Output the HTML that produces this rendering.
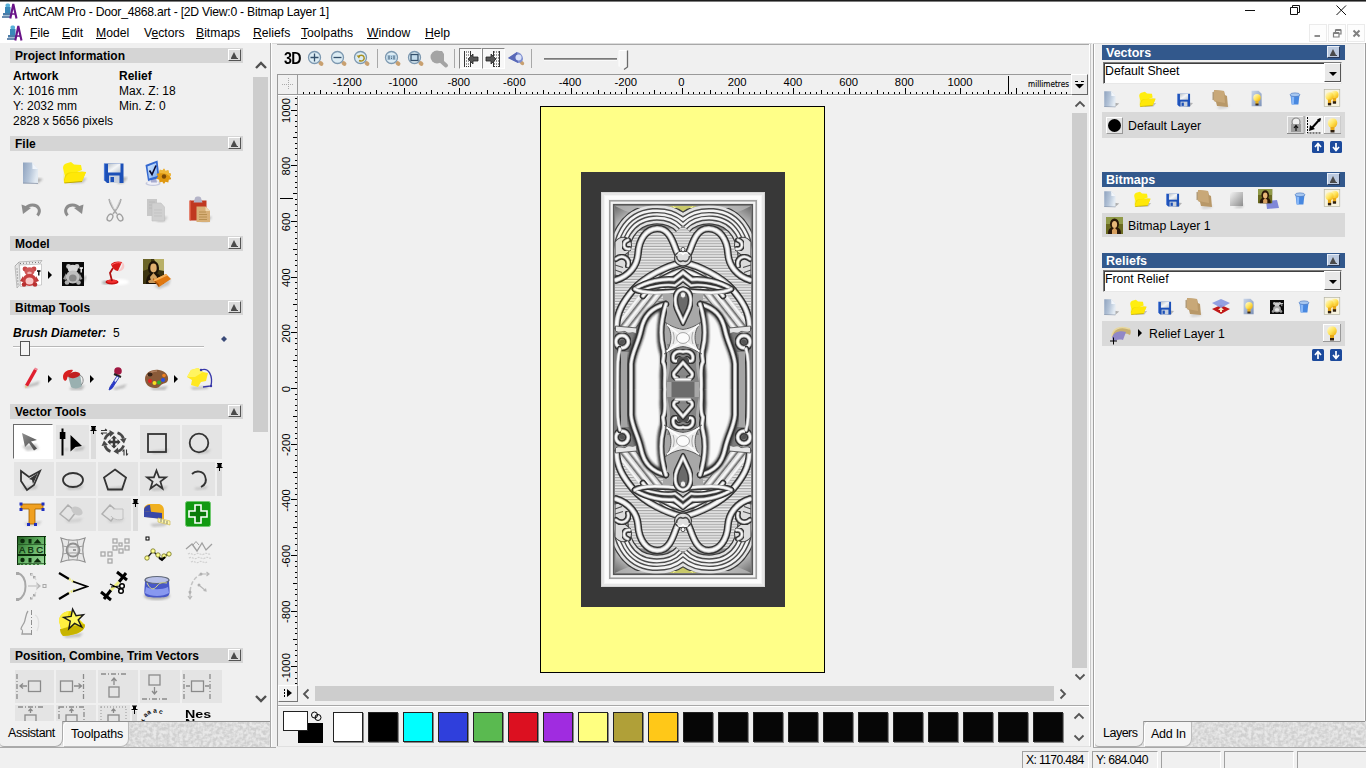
<!DOCTYPE html>
<html lang="en">
<head>
<meta charset="utf-8">
<title>ArtCAM Pro - Door_4868.art - [2D View:0 - Bitmap Layer 1]</title>
<style>
*{box-sizing:border-box;margin:0;padding:0}
html,body{width:1366px;height:768px;overflow:hidden;background:#f0f0f0;font-family:"Liberation Sans",sans-serif;font-size:12px;color:#000}
.abs{position:absolute}
#app{position:relative;width:1366px;height:768px;overflow:hidden;background:#f0f0f0}
#topline{left:0;top:0;width:1366px;height:2px;background:linear-gradient(#1b1b1b 0,#1b1b1b 1px,#7c7c7c 1px,#7c7c7c 2px)}
#titlebar{left:0;top:2px;width:1366px;height:21px;background:#fff}
#title{left:23px;top:3px;font-size:12.2px;line-height:14px;white-space:nowrap;color:#000;letter-spacing:-0.24px}
#menubar{left:0;top:23px;width:1366px;height:20px;background:#fff}
.mi{position:absolute;top:3px;font-size:12.2px;line-height:14px;white-space:nowrap}
.mi u{text-decoration:underline;text-underline-offset:1px}
/* left panel */
#left{left:0;top:43px;width:272px;height:705px;background:#f0f0f0}
.lh{position:absolute;left:10px;width:233px;height:15px;background:#d5d5d5;font-weight:bold;font-size:12px;line-height:17px;overflow:hidden;padding-left:5px;white-space:nowrap;color:#000}
.cbtn{position:absolute;width:13px;height:12px;background:#dcdcdc;border-right:1px solid #555;border-bottom:1px solid #555;border-left:1px solid #fff;border-top:1px solid #fff}
.cbtn:after{content:"";position:absolute;left:2px;top:2px;border-left:3.500px solid transparent;border-right:3.500px solid transparent;border-bottom:6px solid #4a4a4a}
.cbtn:before{content:"";position:absolute;left:2px;top:8px;width:7px;height:1px;background:#4a4a4a}
.cb2{background:#bccadf;border-left-color:#e8eef8;border-top-color:#e8eef8;border-right-color:#2a3a58;border-bottom-color:#2a3a58}
.t{position:absolute;white-space:nowrap;font-size:12px;line-height:14px}
.b{font-weight:bold}
.ic{position:absolute;overflow:visible}
.cell{position:absolute;background:#e4e4e4}
.pin{position:absolute;width:5px;background:#dcdcdc}
/* right panel */
.rh{position:absolute;left:1102px;width:243px;height:15px;background:#32588c;color:#fff;font-weight:bold;font-size:12.5px;line-height:17px;overflow:hidden;padding-left:4px}
.rrow{position:absolute;left:1102px;width:243px;background:#d9d9d9}
.dd{position:absolute;left:1103px;width:239px;height:22px;background:#fff;border:1px solid #7a7a7a;border-right-color:#e8e8e8;border-bottom-color:#e8e8e8;box-shadow:inset 1px 1px 0 #404040}
.ddb{position:absolute;right:0px;top:0px;width:17px;height:19px;background:#e8e8e8;border:1px solid #fff;border-right-color:#555;border-bottom-color:#555}
.ddb:after{content:"";position:absolute;left:4px;top:8px;border-left:4px solid transparent;border-right:4px solid transparent;border-top:4px solid #000}
.sw{position:absolute;top:712px;width:30px;height:30px;border:1px solid #222;box-shadow:1px 1px 0 #888}
.sb{position:absolute;height:18px;top:751px;border:1px solid #a0a0a0;border-right-color:#fff;border-bottom-color:#fff;font-size:12.2px;line-height:16px;padding-left:3px;white-space:nowrap;overflow:hidden;letter-spacing:-0.65px}
</style>
</head>
<body>
<div id="app">
<svg width="0" height="0" style="position:absolute">
<defs>
<linearGradient id="gBlue" x1="0" y1="0" x2="1" y2="1"><stop offset="0" stop-color="#c9d6ea"/><stop offset="1" stop-color="#7d92b8"/></linearGradient>
<linearGradient id="gYel" x1="0" y1="0" x2="0" y2="1"><stop offset="0" stop-color="#fff25a"/><stop offset="1" stop-color="#e6cf10"/></linearGradient>
<linearGradient id="gBulb" x1="0" y1="0" x2="1" y2="1"><stop offset="0" stop-color="#fffbe0"/><stop offset="0.500" stop-color="#ffe45a"/><stop offset="1" stop-color="#f0a800"/></linearGradient>
<linearGradient id="gGrey" x1="0" y1="0" x2="1" y2="1"><stop offset="0" stop-color="#f4f4f4"/><stop offset="1" stop-color="#8c8c8c"/></linearGradient>
<linearGradient id="gNew" x1="0" y1="0" x2="1" y2="0.300"><stop offset="0" stop-color="#8ea2be"/><stop offset="0.550" stop-color="#b4c4d8"/><stop offset="1" stop-color="#e2eaf2"/></linearGradient>
<linearGradient id="gSilver" x1="0" y1="0" x2="1" y2="1"><stop offset="0" stop-color="#b8c0c8"/><stop offset="0.500" stop-color="#f4f6f8"/><stop offset="1" stop-color="#c0c8d0"/></linearGradient>
<linearGradient id="gScreen" x1="0" y1="0" x2="1" y2="1"><stop offset="0" stop-color="#d8ecff"/><stop offset="1" stop-color="#78a8f0"/></linearGradient>
<linearGradient id="gArrow" x1="0" y1="0" x2="1" y2="1"><stop offset="0" stop-color="#909090"/><stop offset="1" stop-color="#484848"/></linearGradient>
<linearGradient id="gAbc" x1="0" y1="0" x2="1" y2="1"><stop offset="0" stop-color="#1e5a1e"/><stop offset="0.450" stop-color="#5eae5e"/><stop offset="1" stop-color="#a4e0a4"/></linearGradient>
<filter id="noise" x="0" y="0" width="100%" height="100%" color-interpolation-filters="sRGB"><feTurbulence type="fractalNoise" baseFrequency="0.300" numOctaves="2" seed="3"/><feColorMatrix type="matrix" values="0 0 0 0 0.910  0 0 0 0 0.910  0 0 0 0 0.910  1.800 1.800 0 0 -1.300"/><feComposite in2="SourceGraphic" operator="in"/></filter>
<filter id="blur1"><feGaussianBlur stdDeviation="0.800"/></filter>
<filter id="blur2"><feGaussianBlur stdDeviation="1.500"/></filter>

<symbol id="i-app" viewBox="0 0 17 17">
  <rect x="3.500" y="0.500" width="4.500" height="4" rx="1.500" fill="#58b0d8"/><rect x="3" y="4" width="5.500" height="6" fill="#3a88b8"/><rect x="1" y="10" width="8" height="2.500" fill="#4a7ca8"/><rect x="0" y="13" width="9" height="2" fill="#6a8cb0"/>
  <path d="M8.300 15.500L11.300 1L14.500 15.500" fill="none" stroke="#6a1488" stroke-width="2.100"/><path d="M9.500 11h4" stroke="#6a1488" stroke-width="1.500"/>
</symbol>

<!-- File icons -->
<symbol id="i-new" viewBox="0 0 24 24">
  <path d="M17 17l6 1l-6 5z" fill="#9a9a9a" opacity="0.750" filter="url(#blur1)"/>
  <path d="M3 1.500h9l6 6.500v14.500H3z" fill="url(#gNew)"/><path d="M12 1.500l6 6.500h-5.500c0-2.500 0-4.500-0.500-6.500z" fill="#f2f6fb"/><path d="M3 22l15 0.500" stroke="#8a96a8" stroke-width="0.800"/>
</symbol>
<symbol id="i-open" viewBox="0 0 28 24">
  <path d="M20 17l7 0l-4 5l-14 0.500z" fill="#9a9a9a" opacity="0.550" filter="url(#blur1)"/>
  <path d="M3 7c0-2 1-4 3-4.500l5-1.500l3 2.500l7 0.500l1 5l-17 7z" fill="#ffee10"/>
  <path d="M3 7l1 15l18-1.500l4-9.500l-4-0.500l-13 1c-3 0.500-4.500 3-5 7z" fill="#f0dc00"/><path d="M4 22l18-1.500l4-9.500c-6 0-15 0.500-17 1.500s-4 4-5 9.500z" fill="#ffe808"/><path d="M4.500 22l17.500-1.500" stroke="#b8a400" stroke-width="0.900"/>
</symbol>
<symbol id="i-save" viewBox="0 0 26 24">
  <path d="M20 16l6 0.500l-5 6l-6 0z" fill="#9a9a9a" opacity="0.700" filter="url(#blur1)"/>
  <path d="M2.500 2.500h19v19.500H5l-2.500-2.500z" fill="#1c50b8"/><rect x="6" y="2.500" width="12.500" height="9" fill="url(#gSilver)"/><rect x="7" y="14.500" width="10.500" height="7.500" fill="#c8d0dc"/><rect x="8.500" y="16" width="3.500" height="5" fill="#1c50b8"/><path d="M2.500 2.500v17" stroke="#4878d8" stroke-width="1.200"/>
</symbol>
<symbol id="i-opts" viewBox="0 0 28 28">
  <ellipse cx="10" cy="24.500" rx="7.500" ry="2.500" fill="#c4c8dc"/><ellipse cx="10" cy="24" rx="6" ry="1.800" fill="#f0f0f8"/>
  <path d="M8 18l5 0.500l1 5h-6z" fill="#a8acd0"/>
  <path d="M2.500 6l12-4.500l2 17.500l-11.500 3z" fill="#3468d0"/><path d="M4.500 7.500l8.500-3.500l1.500 13l-8.500 2.500z" fill="url(#gScreen)"/><path d="M6.500 11.500l2.500 4l4-9" fill="none" stroke="#0a0a30" stroke-width="1.600"/>
  <path d="M21 9.500l1.500 2.500l2.800-0.800l0.500 2.800l2.700 1l-1.500 2.500l1.500 2.500l-2.700 0.800l-0.500 2.800l-2.800-0.800l-1.500 2.200l-1.800-2.200l-2.700 0.800l-0.300-2.800l-2.700-1l1.500-2.300l-1.500-2.500l2.700-1l0.300-2.800l2.700 0.800z" fill="#e09810"/><path d="M21 9.500l1.500 2.500l2.800-0.800l0.500 2.800l2.700 1l-1.500 2.500c-3-3-7-4-11-3l0.500-1.200l0.300-2.800l2.700 0.800z" fill="#f0b838"/><circle cx="21" cy="17.500" r="2.200" fill="#7a4a08"/>
</symbol>
<symbol id="i-undo" viewBox="0 0 24 22">
  <path d="M2 17.500h9M15 17.500h6" stroke="#b4b4b4" stroke-width="1.500" filter="url(#blur1)"/>
  <path d="M17.500 16.500c4-5 1-10.500-5-10.500c-3 0-5 1-6.500 3" fill="none" stroke="#8c8c8c" stroke-width="3"/><path d="M1.500 5.500l9.500 3.500l-8 6z" fill="#8c8c8c"/>
</symbol>
<symbol id="i-redo" viewBox="0 0 24 22">
  <path d="M3 17.500h6M13 17.500h9" stroke="#b4b4b4" stroke-width="1.500" filter="url(#blur1)"/>
  <path d="M6.500 16.500c-4-5-1-10.500 5-10.500c3 0 5 1 6.500 3" fill="none" stroke="#8c8c8c" stroke-width="3"/><path d="M22.500 5.500l-9.500 3.500l8 6z" fill="#8c8c8c"/>
</symbol>
<symbol id="i-cut" viewBox="0 0 22 26">
  <path d="M5 2c1 5 4 10 8 15M17 2c-1 5-4 10-8 15" stroke="#a8a8a8" stroke-width="1.500" fill="none"/><path d="M6 3l4 9M16 3l-4 9" stroke="#d0d0d0" stroke-width="1" fill="none"/>
  <ellipse cx="6" cy="20.500" rx="2.500" ry="3.600" fill="none" stroke="#a0a0a0" stroke-width="1.400" transform="rotate(30 6 20.500)"/><ellipse cx="16" cy="20.500" rx="2.500" ry="3.600" fill="none" stroke="#a0a0a0" stroke-width="1.400" transform="rotate(-30 16 20.500)"/>
</symbol>
<symbol id="i-copy" viewBox="0 0 24 26">
  <path d="M17 19l6 1l-4 5l-8 0z" fill="#b0b0b0" opacity="0.600" filter="url(#blur1)"/>
  <path d="M2 2h10v17H2z" fill="#c8c8c8"/><path d="M4 5h6M4 8h6M4 11h6" stroke="#b8b8b8" stroke-width="0.800"/><path d="M7 6h9l3.500 4v14H7z" fill="#d0d0d0" stroke="#c0c0c0" stroke-width="0.600"/><path d="M9 13h8M9 16h8M9 19h8" stroke="#c0c0c0" stroke-width="0.800"/>
</symbol>
<symbol id="i-paste" viewBox="0 0 26 28">
  <path d="M19 21l6 1l-4 5l-8 0z" fill="#9a9a9a" opacity="0.600" filter="url(#blur1)"/>
  <path d="M3 5.500h16.500v20H3z" fill="#c03820"/><path d="M3 5.500v20" stroke="#e06048" stroke-width="1.500"/><path d="M8 3c0-2 6-2 6 0l1.500 4.500h-9z" fill="#b4b4c8"/><path d="M9.500 11.500h9l4.500 4.500v11h-13.500z" fill="#d8b078"/><path d="M18.500 11.500l4.500 4.500h-4.500z" fill="#f0d8b0"/><path d="M12 17h7M12 19.500h8M12 22h8M12 24.500h8" stroke="#b08848" stroke-width="0.800"/>
</symbol>

<!-- Model icons -->
<symbol id="i-bear" viewBox="0 0 30 30">
  <path d="M1 7l4-4l23-1.500l-3 4z" fill="#ececec" stroke="#9a9a9a" stroke-width="0.600"/><path d="M1 7l4-4l1.500 22l-3.500 4z" fill="#e4e4e4" stroke="#9a9a9a" stroke-width="0.600"/>
  <path d="M6 4.500h1M9 4.300h1M12 4.100h1M15 3.900h1M18 3.700h1M21 3.500h1M24 3.300h1M3 9.500v1M3.200 12.500v1M3.400 15.500v1M3.600 18.500v1M3.800 21.500v1M4 24.500v1" stroke="#555" stroke-width="0.800"/>
  <path d="M5.500 6l22-1l0 21l-21 1.500z" fill="#fff" stroke="#b0b0b0" stroke-width="0.600"/>
  <circle cx="11" cy="10" r="2.400" fill="#c84848"/><circle cx="20" cy="10" r="2.400" fill="#c84848"/><ellipse cx="15.500" cy="12.500" rx="5" ry="4.200" fill="#d05858"/><ellipse cx="15.500" cy="14" rx="2.300" ry="1.600" fill="#f0b0b0"/>
  <path d="M9 17l-3 5l3 1zM22 17l3 5l-3 1z" fill="#b83838"/>
  <ellipse cx="15.500" cy="21" rx="7" ry="6" fill="#c84040"/><ellipse cx="15.500" cy="22" rx="4" ry="3.500" fill="#f8c8c8"/>
  <circle cx="10" cy="25.500" r="2.300" fill="#b83030"/><circle cx="21" cy="25.500" r="2.300" fill="#b83030"/>
  <path d="M23 12h3.500M24.800 12v4.500" stroke="#000" stroke-width="1.300"/>
</symbol>
<symbol id="i-bearbw" viewBox="0 0 26 26">
  <path d="M20 16l6-1l-3 6l-3 1z" fill="#999" opacity="0.700" filter="url(#blur1)"/>
  <rect x="1" y="1" width="22" height="24" fill="#0a0a0a"/>
  <circle cx="7.500" cy="5.500" r="2.400" fill="#c8c8c8"/><circle cx="16" cy="5.500" r="2.400" fill="#c8c8c8"/><ellipse cx="11.800" cy="8" rx="5" ry="4.200" fill="#d8d8d8"/>
  <path d="M5 12l-3 6l3 1zM18.500 12l3 6l-3 1z" fill="#999"/>
  <ellipse cx="11.800" cy="16" rx="7" ry="6.500" fill="#c0c0c0"/><ellipse cx="11.800" cy="17" rx="3.800" ry="3.600" fill="#888"/>
  <circle cx="6" cy="21.500" r="2.300" fill="#b0b0b0"/><circle cx="17.500" cy="21.500" r="2.300" fill="#b0b0b0"/>
  <path d="M18.500 7h3.500M20.200 7v4.500" stroke="#fff" stroke-width="1.300"/>
</symbol>
<symbol id="i-lamp" viewBox="0 0 30 30">
  <ellipse cx="20" cy="23" rx="9" ry="3" fill="#fff" filter="url(#blur1)"/>
  <ellipse cx="7" cy="23.500" rx="5" ry="2" fill="#888" opacity="0.600" filter="url(#blur1)"/>
  <ellipse cx="12" cy="23" rx="6.500" ry="2.600" fill="#c81010"/><ellipse cx="12" cy="22.300" rx="5" ry="1.700" fill="#f03030"/>
  <path d="M12 22l-2-8l3-5" stroke="#b01010" stroke-width="1.800" fill="none"/>
  <path d="M11 5c3-3 8-3 11-2l-4 9c-3 0-6-3-7-7z" fill="#d81818"/><path d="M22 3c1 3-1 7-4 9c2 1 5-1 6-3s0-5-2-6z" fill="#f8c8c8"/><path d="M12 6c2-2 6-3 9-2" stroke="#ff6060" stroke-width="1" fill="none"/>
</symbol>
<symbol id="i-mona" viewBox="0 0 30 32">
  <path d="M12 28l17-7l-2 6l-10 4z" fill="#999" opacity="0.500" filter="url(#blur1)"/>
  <rect x="1" y="1" width="21" height="25" fill="#3c3410"/><path d="M12 1h10v12l-5-1z" fill="#b8b068"/><path d="M1 1h8v9l-8 3z" fill="#6a6428"/>
  <path d="M4 26c0-7 2-11 8-11s8 4 8 11z" fill="#1c1206"/><ellipse cx="11.500" cy="10" rx="5.500" ry="7" fill="#1c1206"/><ellipse cx="11.500" cy="10" rx="3.200" ry="4.400" fill="#e0b070"/><path d="M8 19l3.500-4l3.500 4l-1 4h-5z" fill="#d0a060"/><path d="M6 23c3-2 8-2 11 0l-1 2h-9z" fill="#c89858"/>
  <path d="M11 22l13-6l5 5l-12 8z" fill="#e07810"/><path d="M11 22l6 7v-2.500l-6-6.500z" fill="#a85008"/><path d="M11 22l13-6l1.500 1.500l-13 6z" fill="#f8b058"/>
</symbol>

<!-- Bitmap tool icons -->
<symbol id="i-pencil" viewBox="0 0 24 24">
  <path d="M3 20l16-5l-2 4l-12 3z" fill="#999" opacity="0.600" filter="url(#blur1)"/>
  <path d="M4 19l9-16l3 1.500l-9 16z" fill="#e02030"/><path d="M4 19l0.500 3.500l2.500-2z" fill="#e8c890"/><path d="M13 3l1-1.500l3 1.500l-1 1.500z" fill="#f08090"/>
</symbol>
<symbol id="i-bucket" viewBox="0 0 26 24">
  <path d="M8 21l16-3l-3 5l-11 0z" fill="#999" opacity="0.600" filter="url(#blur1)"/>
  <path d="M7 9l12-2l2 12c-3 3-9 3-11 1z" fill="#9ab0b0"/><ellipse cx="13" cy="8" rx="6.200" ry="3" fill="#c02020" transform="rotate(-10 13 8)"/>
  <path d="M2 10c0-5 5-8 10-7c-1 3-5 4-6 9c-1 3-4 2-4-2z" fill="#d82020"/>
  <path d="M19 8c4 2 4 8 1 10" fill="none" stroke="#888" stroke-width="1"/>
</symbol>
<symbol id="i-dropper" viewBox="0 0 24 26">
  <path d="M8 22l14-4l-3 4l-9 2z" fill="#999" opacity="0.600" filter="url(#blur1)"/>
  <circle cx="13" cy="5" r="3.800" fill="#a01840"/><path d="M9 8l7 3" stroke="#222" stroke-width="2"/>
  <path d="M12 10l-7 11l-1 3l3-1.500l7-11z" fill="#e8f0ff" stroke="#3848b8" stroke-width="1"/><path d="M9 15l-4 6l-1 3l3-1.500l4-6.500z" fill="#2838c8"/>
</symbol>
<symbol id="i-palette" viewBox="0 0 30 24">
  <path d="M8 21l18-2l-3 4l-12 0z" fill="#999" opacity="0.600" filter="url(#blur1)"/>
  <path d="M3 12c0-6 6-10 14-9c6 1 10 5 9 10c-1 4-5 3-7 5s-2 3-6 3c-6 0-10-4-10-9z" fill="#8a5a38"/><path d="M5 9c2-3 6-5 10-5" stroke="#b08060" stroke-width="1.500" fill="none"/>
  <ellipse cx="8" cy="7.500" rx="2.500" ry="2" fill="#3a2418"/>
  <circle cx="8" cy="14" r="2" fill="#e82020"/><circle cx="12.500" cy="16" r="2" fill="#f8e020"/><circle cx="17" cy="15.500" r="2" fill="#30b030"/><circle cx="21" cy="13" r="2" fill="#2850e8"/><circle cx="22" cy="8.500" r="1.800" fill="#f08020"/>
</symbol>
<symbol id="i-b2v" viewBox="0 0 30 26">
  <path d="M6 22l20-1l-3 3l-14 1z" fill="#999" opacity="0.500" filter="url(#blur1)"/>
  <path d="M17 5c8-3 12 6 10 16l-8 1" fill="none" stroke="#3838a8" stroke-width="1.300"/>
  <path d="M3 12l4-7l7-2l5 4l5 1l-2 8l-5 1l-3 5l-7-2l1-5z" fill="#ffe820"/>
  <path d="M3 12l4-7l7-2l5 4l-8 5z" fill="#fff460"/>
  <circle cx="17" cy="5" r="1.200" fill="#3838a8"/><circle cx="27" cy="21" r="1.200" fill="#3838a8"/>
</symbol>
<symbol id="i-pin" viewBox="0 0 7 8"><path d="M1 0.500h5M2 1v3M5 1v3M0.500 4.500h6M3.500 5v3" stroke="#000" stroke-width="1" fill="none"/><rect x="2" y="1" width="3" height="3" fill="#000"/></symbol>
<!-- Vector tool icons -->
<symbol id="v-select" viewBox="0 0 26 26">
  <path d="M5 17l14-2l3 5l-12 2z" fill="#bbb" opacity="0.800" filter="url(#blur1)"/>
  <path d="M5 4l15 7l-6 1.500l6 7l-3 2l-5-7.500l-4 4z" fill="url(#gArrow)"/>
</symbol>
<symbol id="v-node" viewBox="0 0 30 30">
  <path d="M16 22l12-3l-2 4l-8 1z" fill="#b0b0b0" opacity="0.800" filter="url(#blur1)"/><path d="M7 22l4-1l-1 3z" fill="#b8b8b8" filter="url(#blur1)"/>
  <path d="M5.500 1.500v27" stroke="#000" stroke-width="2"/><rect x="2.800" y="5" width="5.600" height="7" fill="#000"/>
  <path d="M13.500 8l11.500 11l-6.500 1l-5 4.500z" fill="#000"/>
</symbol>
<symbol id="v-xform" viewBox="0 0 30 30">
  <g fill="none" stroke="#484848" stroke-width="2.600">
  <path d="M5.800 12.500a9.800 9.800 0 0 1 5.700-6.300"/><path d="M18.500 5.800a9.800 9.800 0 0 1 6 5.700"/>
  <path d="M24.700 18.500a9.800 9.800 0 0 1 -6.200 6"/><path d="M11.500 24.500a9.800 9.800 0 0 1 -5.700-6"/></g>
  <path d="M10.500 3l5 3l-4.500 4z M27.500 11l-2.500 5.500l-4-4.500z M19.500 27.500l-5-3l4.500-4z M2.500 19l2.500-5.500l4 4.500z" fill="#484848"/>
  <path d="M15 8.500l3 3h-1.800v2.300h2.300v-1.800l3 3l-3 3v-1.800h-2.300v2.300h1.800l-3 3l-3-3h1.800v-2.300h-2.300v1.800l-3-3l3-3v1.800h2.300v-2.300h-1.800z" fill="#3a3a3a"/>
  <path d="M2 3.500h6M8 3.500l-2-1.500M2 6h6M2 6l2 1.500" stroke="#3a3a3a" stroke-width="1.100" fill="none"/>
  <path d="M25 22.500v6M25 22.500l-1.500 2M27.500 22.500v6M27.500 28.500l1.500-2" stroke="#3a3a3a" stroke-width="1.100" fill="none"/>
</symbol>
<symbol id="v-rect" viewBox="0 0 26 26">
  <path d="M6 20l18-2l-2 4l-14 1z" fill="#bbb" opacity="0.800" filter="url(#blur1)"/>
  <rect x="3" y="3" width="18" height="18" fill="none" stroke="#333" stroke-width="1.800"/>
</symbol>
<symbol id="v-circle" viewBox="0 0 26 26">
  <path d="M8 21l16-3l-3 4l-10 1z" fill="#bbb" opacity="0.800" filter="url(#blur1)"/>
  <circle cx="12" cy="12" r="9.300" fill="none" stroke="#333" stroke-width="1.800"/>
</symbol>
<symbol id="v-poly" viewBox="0 0 28 26">
  <path d="M4 20l16-2l-2 4l-12 1z" fill="#bbb" opacity="0.800" filter="url(#blur1)"/>
  <path d="M3 4l8 6l11-6l-6 14l-7 5l-6-9z" fill="none" stroke="#333" stroke-width="1.800"/><path d="M20 6l-5 11l-1-4l-3-1z" fill="#333"/>
</symbol>
<symbol id="v-ellipse" viewBox="0 0 28 26">
  <path d="M6 20l18-2l-3 4l-12 1z" fill="#bbb" opacity="0.800" filter="url(#blur1)"/>
  <ellipse cx="13" cy="13" rx="10" ry="7" fill="none" stroke="#333" stroke-width="1.800"/>
</symbol>
<symbol id="v-pent" viewBox="0 0 28 26">
  <path d="M6 21l18-2l-3 4l-12 1z" fill="#bbb" opacity="0.800" filter="url(#blur1)"/>
  <path d="M14 2.500l11 8l-4 12h-14l-4-12z" fill="none" stroke="#333" stroke-width="1.800"/>
</symbol>
<symbol id="v-star" viewBox="0 0 26 26">
  <path d="M6 21l18-2l-3 4l-12 1z" fill="#bbb" opacity="0.800" filter="url(#blur1)"/>
  <path d="M12.500 3.500l2.600 6.800h6.900l-5.600 4.300l2.100 6.900l-6-4.300l-6 4.300l2.100-6.900l-5.600-4.300h6.900z" fill="none" stroke="#333" stroke-width="1.700"/>
</symbol>
<symbol id="v-arc" viewBox="0 0 26 26">
  <path d="M8 21l14-2l-2 3l-10 1z" fill="#bbb" opacity="0.800" filter="url(#blur1)"/>
  <path d="M6 7c4-4 11-3 13 2s0 9-4 11" fill="none" stroke="#333" stroke-width="1.800"/>
</symbol>
<symbol id="v-text" viewBox="0 0 28 28">
  <path d="M6 22l18-2l-3 4l-12 1z" fill="#bbb" opacity="0.700" filter="url(#blur1)"/>
  <path d="M3 3h22v5h-8v15h-6v-15h-8z" fill="#f0a020" stroke="#a06000" stroke-width="0.800"/>
  <g fill="#2030c0"><rect x="1.500" y="1.500" width="3" height="3"/><rect x="23.500" y="1.500" width="3" height="3"/><rect x="1.500" y="7" width="3" height="3"/><rect x="23.500" y="7" width="3" height="3"/><rect x="9" y="22" width="3" height="3"/><rect x="16" y="22" width="3" height="3"/></g>
</symbol>
<symbol id="v-g1" viewBox="0 0 30 26">
  <path d="M8 19l18-2l-3 4l-12 1z" fill="#ccc" opacity="0.800" filter="url(#blur1)"/>
  <path d="M3 13l8-9l8 7l-7 9z" fill="none" stroke="#b0b0b0" stroke-width="1.500"/><ellipse cx="20" cy="10" rx="6" ry="4" fill="#c8c8c8" transform="rotate(30 20 10)"/>
</symbol>
<symbol id="v-g2" viewBox="0 0 30 26">
  <path d="M8 19l18-2l-3 4l-12 1z" fill="#ccc" opacity="0.800" filter="url(#blur1)"/>
  <path d="M3 13l8-9l8 7l-7 9z" fill="none" stroke="#b0b0b0" stroke-width="1.500"/><path d="M14 8h10v10c-5 2-10 0-12-3" fill="#e4e4e4" stroke="#c0c0c0" stroke-width="1"/>
</symbol>
<symbol id="v-tape" viewBox="0 0 30 28">
  <path d="M8 23l18-2l-3 4l-12 1z" fill="#999" opacity="0.500" filter="url(#blur1)"/>
  <path d="M2 8c0-3 3-5 7-5h7c4 0 6 3 6 7v8l-18-2z" fill="#f0b020"/><path d="M2 10l18 2v6l-18-2z" fill="#3848a8"/><path d="M2 9c0-3 3-5 6-5l1 7l-7-1z" fill="#3848a8"/>
  <path d="M16 17l12 3v4l-12-3z" fill="#fff8b0" stroke="#c8b040" stroke-width="0.600"/><path d="M19 18v3M22 19v3M25 20v3" stroke="#555" stroke-width="0.700"/>
</symbol>
<symbol id="v-plus" viewBox="0 0 26 26">
  <rect x="0.500" y="0.500" width="25" height="25" rx="2" fill="#129a12" stroke="#70c870" stroke-width="1"/>
  <path d="M10 4h6v6h6v6h-6v6h-6v-6h-6v-6h6z" fill="#0a7a0a" stroke="#fff" stroke-width="1.600"/>
</symbol>
<symbol id="v-abc" viewBox="0 0 30 30">
  <rect x="0" y="0" width="29" height="29" fill="url(#gAbc)"/>
  <path d="M0 0.500h29M0 18.500h29M0 19.500h29M27.500 0v29M0.500 0v29" stroke="#0c2c0c" stroke-width="1"/><path d="M0 8.500h29M0 27.500h29" stroke="#1c4c1c" stroke-width="0.700"/>
  <circle cx="5.500" cy="5" r="2.300" fill="#0c2c0c"/><rect x="11.500" y="3" width="3" height="4.500" fill="#0c2c0c"/><path d="M16.500 7.500l4-4.500l4 4.500z" fill="#0c2c0c"/>
  <text x="2" y="17.300" font-family="Liberation Sans, sans-serif" font-size="9.500" fill="#0c2c0c" stroke="#0c2c0c" stroke-width="0.250" textLength="24">ABC</text>
  <circle cx="5.500" cy="24" r="2.200" fill="#0c2c0c"/><rect x="11.500" y="22" width="3" height="4.500" fill="#0c2c0c"/><path d="M16.500 26.500l4-4.500l4 4.500z" fill="#0c2c0c"/>
  <path d="M2 29v-1M5 29v-1M9 29v-1M13 29v-1M17 29v-1M21 29v-1" stroke="#0c2c0c" stroke-width="1.200"/>
</symbol>
<symbol id="v-warp" viewBox="0 0 28 28">
  <path d="M2 2c8 3 16 3 24 0c-3 8-3 16 0 24c-8-3-16-3-24 0c3-8 3-16 0-24z" fill="#e8e8e8" stroke="#909090" stroke-width="1.200"/>
  <path d="M10 3.500c-1.500 7-1.500 14 0 21M18 3.500c1.500 7 1.500 14 0 21M3.500 10c7 1.500 14 1.500 21 0M3.500 18c7-1.500 14-1.500 21 0" stroke="#a0a0a0" stroke-width="1" fill="none"/>
  <circle cx="14" cy="14" r="6.500" fill="none" stroke="#909090" stroke-width="1.800"/><path d="M17 14h-3" stroke="#909090" stroke-width="1.800"/>
</symbol>
<symbol id="v-dots" viewBox="0 0 32 28">
  <g fill="none" stroke="#a8a8a8" stroke-width="1.300"><rect x="2" y="15" width="4" height="4"/><rect x="9" y="15" width="4" height="4"/><rect x="9" y="22" width="4" height="4"/><rect x="14" y="2" width="4" height="4"/><rect x="26" y="2" width="4" height="4"/><rect x="20" y="6" width="3" height="3"/><rect x="14" y="9" width="4" height="4"/><rect x="20" y="12" width="4" height="4"/><rect x="26" y="9" width="4" height="4"/></g>
</symbol>
<symbol id="v-nodes" viewBox="0 0 30 28">
  <rect x="3" y="2" width="3" height="3" fill="#fff" stroke="#000" stroke-width="1"/>
  <path d="M4 23l6-7l8 8l4-4l4 0" fill="none" stroke="#222" stroke-width="1.500"/>
  <g fill="#ffff90" stroke="#707020" stroke-width="0.800"><circle cx="4" cy="23" r="2.200"/><circle cx="10" cy="16" r="2.200"/><circle cx="15" cy="20" r="2.200"/><circle cx="21" cy="21" r="2.200"/><circle cx="26" cy="19" r="2.200"/></g>
  <path d="M16 23l3 2l3-3" stroke="#000" stroke-width="2" fill="none"/>
</symbol>
<symbol id="v-smooth" viewBox="0 0 30 26">
  <path d="M2 10l6-5l5 7l5-8l4 7l6-6" fill="none" stroke="#a0a0a0" stroke-width="1.300"/>
  <path d="M9 6l3-3.500l3 3.500" fill="none" stroke="#a0a0a0" stroke-width="1"/>
  <path d="M4 15c3-2 5 2 8 0s5 2 8 0s4 1 7 0M5 19c3-2 5 2 8 0s5 2 8 0s4 1 6 0M7 23c3-2 5 2 8 0s5 2 8 0" fill="none" stroke="#d0d0d0" stroke-width="1.200" stroke-dasharray="2 1"/>
</symbol>
<symbol id="v-mir1" viewBox="0 0 32 30">
  <path d="M3 2c10 4 10 22 0 27" fill="none" stroke="#a8a8a8" stroke-width="2"/>
  <g fill="#a8a8a8"><rect x="1" y="1" width="3" height="3"/><rect x="1" y="27" width="3" height="3"/><rect x="15" y="2" width="2.500" height="2.500"/><rect x="15" y="26" width="2.500" height="2.500"/><rect x="18" y="5" width="2.500" height="2.500"/><rect x="18" y="23" width="2.500" height="2.500"/></g>
  <path d="M16 3c8 4 8 20 0 24" fill="none" stroke="#d8d8d8" stroke-width="1.300" stroke-dasharray="3 2"/>
  <path d="M13 15h12M22 12.500l3 2.500l-3 2.500" fill="none" stroke="#b8b8b8" stroke-width="1.200"/><rect x="28" y="13.500" width="3" height="3" fill="none" stroke="#a8a8a8" stroke-width="1"/>
</symbol>
<symbol id="v-vee" viewBox="0 0 32 30">
  <path d="M2 2l10 6M12 22l-10 6" stroke="#000" stroke-width="2.300" fill="none"/>
  <path d="M12 8l6 3.500M18 18.500l-6 3.500" stroke="#e8e880" stroke-width="2.300" fill="none" stroke-dasharray="2 1"/>
  <path d="M16 10.500l14 5l-14 5" stroke="#000" stroke-width="1.800" fill="none"/>
</symbol>
<symbol id="v-trim" viewBox="0 0 32 32">
  <path d="M18 2l10 8M2 22l10 8" stroke="#000" stroke-width="3" fill="none"/>
  <path d="M27 3l-7 9M12 20l-7 9" stroke="#000" stroke-width="3" fill="none"/>
  <path d="M20 12l-8 8" stroke="#f0f080" stroke-width="3"/>
  <path d="M11 14l10 5M12 17l9-1" stroke="#000" stroke-width="1.200"/><circle cx="23" cy="16" r="2.300" fill="#fff" stroke="#000" stroke-width="1.500"/><circle cx="22" cy="21" r="2.300" fill="#fff" stroke="#000" stroke-width="1.500"/>
</symbol>
<symbol id="v-bowl" viewBox="0 0 30 28">
  <ellipse cx="15" cy="23" rx="13" ry="4" fill="#888" opacity="0.600" filter="url(#blur1)"/>
  <path d="M3 7c0 8-2 14 1 16s19 2 22 0s1-8 1-16z" fill="#4858c8"/><path d="M4 14c6 3 16 3 22 0l1 6c-6 4-18 4-24 0z" fill="#8898f0"/>
  <ellipse cx="15" cy="7" rx="12" ry="3.500" fill="#b8c0e8" stroke="#606878" stroke-width="1.200"/>
  <path d="M5 10c3 6 6 8 10 3s7-3 10-3" fill="none" stroke="#d8d888" stroke-width="1"/>
</symbol>
<symbol id="v-mir2" viewBox="0 0 28 30">
  <path d="M18 3c-6 2-12 8-12 20" fill="none" stroke="#c4c4c4" stroke-width="1.500" stroke-dasharray="4 2"/>
  <path d="M18 3h7M22.500 1l2.500 2l-2.500 2M16 15l6 5M19.500 19.500l2.500 0.500l-0.500-2.500M6 22v6M4 25l2 3l2-3" fill="none" stroke="#b8b8b8" stroke-width="1.200"/>
  <circle cx="17" cy="3" r="1.500" fill="#b0b0b0"/><circle cx="15" cy="14" r="1.500" fill="#b0b0b0"/><circle cx="6" cy="21" r="1.500" fill="#b0b0b0"/>
</symbol>
<symbol id="v-face" viewBox="0 0 26 28">
  <path d="M8 2c-3 4-2 8-4 12c-1 2-3 4-3 6c2 1 2 2 1 5h9" fill="none" stroke="#a0a0a0" stroke-width="1.300"/>
  <path d="M11.500 1v26" stroke="#909090" stroke-width="1" stroke-dasharray="5 2 1 2"/>
  <path d="M15 6c4 2 5 10 2 16" fill="none" stroke="#e0e0e0" stroke-width="1.300"/>
</symbol>
<symbol id="v-star3d" viewBox="0 0 32 32">
  <path d="M6 28l20-2l-3 4l-14 1z" fill="#999" opacity="0.500" filter="url(#blur1)"/>
  <path d="M2 14c0-6 5-10 12-10l14 14c0 5-6 10-22 11z" fill="#e8d810"/><path d="M3 22l24-5l1 1c0 5-6 10-22 11c-2-2-3-4-3-7z" fill="#c8b400"/>
  <path d="M2 14c0-5 4-9 10-10l-2 8l6 6l-12 4z" fill="#fff040"/>
  <path d="M17 2l2.500 7h7.500l-6 4.500l2.500 7.500l-6.500-4.500l-6.500 4.500l2.500-7.500l-6-4.500h7.500z" fill="#fff860" stroke="#1a1a1a" stroke-width="1.400" transform="rotate(-8 17 12)"/>
</symbol>
<symbol id="p-row" viewBox="0 0 208 51">
  <g fill="none" stroke="#8a8a8a" stroke-width="1.300">
    <!-- 1: align left -->
    <path d="M2 4v25" stroke-dasharray="5 2 1 2"/><rect x="13.500" y="11" width="12" height="10.500"/><path d="M12 16h-7M8 13.500l-3 2.500l3 2.500"/>
    <!-- 2: align right -->
    <path d="M68.500 4v25" stroke-dasharray="5 2 1 2"/><rect x="45.500" y="11" width="12" height="10.500"/><path d="M59 16h7.500M63.500 13.500l3 2.500l-3 2.500"/>
    <!-- 3: align top -->
    <path d="M86 4h25" stroke-dasharray="5 2 1 2"/><rect x="94" y="17" width="10" height="10"/><path d="M99 15v-7M96.500 11l2.500-3l2.500 3"/>
    <!-- 4: align bottom -->
    <path d="M127 29h25" stroke-dasharray="5 2 1 2"/><rect x="134" y="5" width="11" height="10"/><path d="M139.500 17v7M137 21l2.500 3l2.500-3"/>
    <!-- 5: centre h -->
    <path d="M169 4v25M195 4v25" stroke-dasharray="5 2 1 2"/><rect x="176.500" y="11" width="12" height="10.500"/><path d="M171 16h4M190 16h4"/>
    <!-- row2 -->
    <path d="M3 37h25" stroke-dasharray="5 2 1 2"/><rect x="10" y="45" width="11" height="8"/><path d="M15.500 43v-4M13.500 41l2-2l2 2"/>
    <rect x="44" y="37" width="25" height="16" stroke-dasharray="5 2 1 2"/><rect x="51" y="45" width="11" height="8"/><path d="M56.500 43v-4M54.500 41l2-2l2 2"/>
    <rect x="86" y="37" width="25" height="16" stroke-dasharray="1 2" stroke="#a8a8a8"/><rect x="93" y="45" width="11" height="8"/><path d="M98.500 43v-4M96.500 41l2-2l2 2"/>
  </g>
  <path d="M117 36h5M118.500 36v3M120.500 36v3M116.500 39.500h6M119.500 40v4" stroke="#000" stroke-width="1" fill="none"/><rect x="118" y="36" width="3" height="3" fill="#000"/>
  <path id="arcp" d="M129 53C131 41 146 38 155 52" fill="none"/><text font-family="Liberation Sans, sans-serif" font-size="6.500" font-weight="bold" fill="#000"><textPath href="#arcp">x aa  a c</textPath></text>
</symbol>
<!-- toolbar -->
<symbol id="z-glass" viewBox="0 0 22 22">
  <ellipse cx="16" cy="15.500" rx="2.600" ry="2.100" fill="#c8a070" transform="rotate(35 16 15.500)"/>
  <circle cx="9.500" cy="9.500" r="6" fill="#dcecf4" stroke="#7c98b0" stroke-width="1.300"/>
</symbol>
<symbol id="z-in" viewBox="0 0 22 22"><use href="#z-glass"/><path d="M5.500 9.500h8M9.500 5.500v8" stroke="#34506c" stroke-width="1.300"/></symbol>
<symbol id="z-out" viewBox="0 0 22 22"><use href="#z-glass"/><path d="M5.500 9.500h8" stroke="#34506c" stroke-width="1.300"/></symbol>
<symbol id="z-prev" viewBox="0 0 22 22"><use href="#z-glass"/><path d="M8 12.500c3.500 1.500 6-1 5-3.500s-4.500-2.500-5.500 0" fill="none" stroke="#a89020" stroke-width="1.500"/><path d="M5.500 7.500l2.500 3l1.500-3z" fill="#a89020"/></symbol>
<symbol id="z-11" viewBox="0 0 22 22"><use href="#z-glass"/><rect x="5" y="7" width="9" height="5" fill="#b4d0e4"/><path d="M7 7.500v4M12 7.500v4M9.500 8.500v0.800M9.500 10.200v0.800" stroke="#3c5870" stroke-width="1"/></symbol>
<symbol id="z-fit" viewBox="0 0 22 22"><use href="#z-glass"/><rect x="6" y="6.500" width="7" height="6" fill="#c4dcec" stroke="#34506c" stroke-width="1.300"/></symbol>
<symbol id="z-obj" viewBox="0 0 22 22">
  <path d="M13 13l5 4.500" stroke="#a4a4a4" stroke-width="4" stroke-linecap="round"/><circle cx="9" cy="9" r="6.500" fill="#a4a4a4"/><path d="M9 3h5l2 3v7h-7z" fill="#a4a4a4"/>
</symbol>
<symbol id="t-l1" viewBox="0 0 18 18">
  <path d="M2 2h6M2 5h6M2 8h4M2 11h6M2 14h6M2 16.500h6" stroke="#333" stroke-width="1" stroke-dasharray="1 1"/><path d="M2.500 1v16M8.500 1v5M8.500 12v5" stroke="#333" stroke-width="1"/>
  <path d="M16 7h-5v-3l-5 5l5 5v-3h5z" fill="#555" stroke="#222" stroke-width="0.800"/>
</symbol>
<symbol id="t-l2" viewBox="0 0 18 18">
  <path d="M10 2h6M10 5h6M12 8h4M10 11h6M10 14h6M10 16.500h6" stroke="#333" stroke-width="1" stroke-dasharray="1 1"/><path d="M15.500 1v16M9.500 1v5M9.500 12v5" stroke="#333" stroke-width="1"/>
  <path d="M2 7h5v-3l5 5l-5 5v-3h-5z" fill="#555" stroke="#222" stroke-width="0.800"/>
</symbol>
<symbol id="t-eye" viewBox="0 0 20 20">
  <ellipse cx="15" cy="14" rx="2.400" ry="1.800" fill="#c8a070" transform="rotate(35 15 14)"/>
  <path d="M1 9l9-6c4 1 6 4 6 7c0 2-2 4-5 4z" fill="#8090d0"/><path d="M1 9l9-6l1 11z" fill="#5868b8"/><circle cx="11.500" cy="8.500" r="3" fill="#d8e0f8"/>
</symbol>

<!-- right panel icons -->
<symbol id="r-new" viewBox="0 0 18 20">
  <path d="M6 17l10-1l-2 3l-7 0z" fill="#999" opacity="0.500" filter="url(#blur1)"/>
  <path d="M2 2h5l2 5l3 1l2 8l-12 2z" fill="url(#gBlue)"/><path d="M2 2h5l1 14l-6 2z" fill="#a8b8d4"/>
</symbol>
<symbol id="r-open" viewBox="0 0 20 20">
  <path d="M5 16l13-2l-2 3l-9 1z" fill="#999" opacity="0.400" filter="url(#blur1)"/>
  <path d="M2 6l4-3l9 1v3l4 1l-3 7l-13-1z" fill="url(#gYel)"/><path d="M2 6l4-3l9 1v3l-12 1z" fill="#f6e838"/>
</symbol>
<symbol id="r-save" viewBox="0 0 20 20">
  <path d="M6 17l12-3l-2 3l-8 1z" fill="#999" opacity="0.400" filter="url(#blur1)"/>
  <path d="M2 3h14v14H4l-2-2z" fill="#2a62c8"/><rect x="5" y="3" width="8" height="6" fill="#e8eefa"/><rect x="5" y="12" width="8" height="5" fill="#9db6e8"/><rect x="7" y="13" width="2.500" height="3" fill="#2a62c8"/>
</symbol>
<symbol id="r-book" viewBox="0 0 20 22">
  <path d="M6 19l12-2l-2 3l-8 1z" fill="#999" opacity="0.400" filter="url(#blur1)"/>
  <path d="M3 2l10 1l1 4l2 1l1 11l-11-1l-1-4l-2-1z" fill="#b89868"/><path d="M3 2l10 1l1 12l-11-2z" fill="#c8a878"/><path d="M3 4l-1.500 1l1.500 1l-1.500 1l1.500 1l-1.500 1l1.500 1l-1.500 1l1.500 1" stroke="#987848" stroke-width="0.800" fill="none"/>
</symbol>
<symbol id="r-newbulb" viewBox="0 0 18 22">
  <path d="M2 1h9l4 4v16H2z" fill="url(#gBlue)"/>
  <circle cx="9" cy="10" r="4.800" fill="url(#gBulb)"/><path d="M7 14h4v4h-4z" fill="#e8b020"/><path d="M7 17.500h4v2.500h-4z" fill="#403020"/>
</symbol>
<symbol id="r-bin" viewBox="0 0 16 20">
  <path d="M2 5h12l-1.500 13h-9z" fill="#4888e0"/><path d="M3 5h4l-0.500 13h-2.500z" fill="#88b8f8"/><ellipse cx="8" cy="5" rx="6.500" ry="2.500" fill="#a8c8f0" stroke="#3868b8" stroke-width="0.800"/>
</symbol>
<symbol id="r-bulbs" viewBox="0 0 20 22">
  <rect x="0.500" y="0.500" width="19" height="21" fill="#f8f4e0" stroke="#b0b0a0" stroke-width="0.800"/>
  <circle cx="13" cy="7" r="5" fill="url(#gBulb)"/><path d="M11 11h4v5h-4z" fill="#e8a818"/><path d="M11 15h4v3h-4z" fill="#302010"/>
  <circle cx="7" cy="9" r="5" fill="url(#gBulb)"/><path d="M5 13h4v5h-4z" fill="#e8a818"/><path d="M5 17h4v3h-4z" fill="#302010"/>
</symbol>
<symbol id="r-bulbbtn" viewBox="0 0 18 18">
  <rect x="0.500" y="0.500" width="17" height="17" fill="#e8e8e8" stroke="#fff" stroke-width="1"/><path d="M17.500 0v17.500h-17.500" fill="none" stroke="#999" stroke-width="1"/>
  <circle cx="9" cy="7" r="4.800" fill="url(#gBulb)"/><path d="M7 11h4v3.500h-4z" fill="#e8a818"/><path d="M7 14h4v2.500h-4z" fill="#302010"/>
</symbol>
<symbol id="r-lbtns" viewBox="0 0 54 18">
  <rect x="0.500" y="0.500" width="16" height="17" fill="#d0d0d0" stroke="#f4f4f4"/><path d="M17 0v17.500h-17" fill="none" stroke="#888"/>
  <circle cx="9" cy="6" r="4" fill="#f0f0f0" stroke="#888" stroke-width="1.200"/><rect x="4" y="8" width="10" height="8" fill="#9a9a9a"/><path d="M9 15v-5M7 12l2-2.500l2 2.500" stroke="#111" stroke-width="1.200" fill="none"/>
  <rect x="19.500" y="0.500" width="16" height="17" fill="#f0f0f0" stroke="#f8f8f8"/><path d="M20.500 1v16h14" fill="none" stroke="#000" stroke-width="1" stroke-dasharray="2 1"/>
  <path d="M33 3l-9 10" stroke="#000" stroke-width="2"/><path d="M22 15l1-6l5 4z" fill="#000"/><path d="M34 2l-4 1.500l3 2.500z" fill="#000"/>
  <rect x="37.500" y="0.500" width="16" height="17" fill="#e4e4e4" stroke="#fff"/><path d="M54 0v17.500h-17" fill="none" stroke="#999"/>
  <circle cx="45.500" cy="7" r="4.800" fill="url(#gBulb)"/><path d="M43.500 11h4v3.500h-4z" fill="#e8a818"/><path d="M43.500 14h4v2.500h-4z" fill="#302010"/>
</symbol>
<symbol id="r-updown" viewBox="0 0 30 12">
  <rect x="0" y="0" width="12" height="12" rx="1.500" fill="#1c4a9c"/><path d="M6 10v-7M3 6l3-3.500l3 3.500" stroke="#fff" stroke-width="1.700" fill="none"/>
  <rect x="18" y="0" width="12" height="12" rx="1.500" fill="#1c4a9c"/><path d="M24 2v7M21 6l3 3.500l3-3.500" stroke="#fff" stroke-width="1.700" fill="none"/>
</symbol>
<symbol id="r-grey" viewBox="0 0 18 20">
  <path d="M6 17l10-3l-2 4l-6 0z" fill="#999" opacity="0.500" filter="url(#blur1)"/>
  <rect x="2" y="2" width="13" height="14" fill="url(#gGrey)"/>
</symbol>
<symbol id="r-mona" viewBox="0 0 17 17">
  <rect x="0" y="0" width="17" height="17" fill="#6a6a20"/><rect x="0" y="0" width="17" height="7" fill="#909a48"/>
  <path d="M2 17c0-5 2-7 6.500-7s6.500 2 6.500 7z" fill="#2a1808"/><ellipse cx="8.500" cy="7" rx="4.500" ry="5.500" fill="#2a1808"/><ellipse cx="8.500" cy="7.500" rx="2.600" ry="3.500" fill="#e8b878"/><path d="M6 13l2.500-2.500l2.500 2.500v4h-5z" fill="#d8a060"/>
</symbol>
<symbol id="r-mona2" viewBox="0 0 22 22">
  <path d="M8 12l11-1l2 8l-12 1z" fill="#8088d8"/>
  <g transform="scale(0.850)"><use href="#r-mona" width="17" height="17"/></g>
</symbol>
<symbol id="r-layers" viewBox="0 0 22 20">
  <path d="M2 12l9-4l9 4l-9 5z" fill="#c01818"/><path d="M11 10l3 3h-2v2h-2v-2h-2z" fill="#f8e8c0"/>
  <path d="M2 6l9-4l9 4l-9 5z" fill="#8898e0" opacity="0.900"/>
</symbol>
<symbol id="r-bearbw" viewBox="0 0 16 16">
  <rect x="0" y="0" width="16" height="16" fill="#0a0a0a"/>
  <circle cx="5" cy="4" r="1.600" fill="#bbb"/><circle cx="11" cy="4" r="1.600" fill="#bbb"/><circle cx="8" cy="5.500" r="2.800" fill="#ccc"/>
  <ellipse cx="8" cy="10.500" rx="4.500" ry="3.800" fill="#aaa"/><ellipse cx="8" cy="11" rx="2.500" ry="2" fill="#e4e4e4"/><circle cx="3.500" cy="13" r="1.500" fill="#999"/><circle cx="12.500" cy="13" r="1.500" fill="#999"/>
  <path d="M12 4h3M13.500 4v3" stroke="#fff" stroke-width="0.800"/>
</symbol>
<symbol id="r-relief" viewBox="0 0 24 22">
  <path d="M3 14c0-8 8-12 18-8c1 2 1 4 0 6c-6-3-12-1-14 5z" fill="#c8b070"/><path d="M3 14c0-8 8-12 18-8" fill="none" stroke="#e8d8a0" stroke-width="1.500"/>
  <path d="M3 14c2-5 8-7 14-5l-3 8c-4-1-8 0-10 2z" fill="#9088c8"/>
  <path d="M1 18h7M4.500 14.500v7" stroke="#000" stroke-width="1"/>
</symbol>
</defs>
</svg>
<div class="abs" id="topline"></div>
<div class="abs" id="titlebar">
  <svg class="ic" style="left:2px;top:1px" width="17" height="17" viewBox="0 0 17 17"><use href="#i-app"/></svg>
  <div class="abs" id="title">ArtCAM Pro - Door_4868.art - [2D View:0 - Bitmap Layer 1]</div>
  <svg class="ic" style="left:1240px;top:-2px" width="120" height="21" viewBox="0 0 120 21" fill="none" stroke="#111" stroke-width="1">
    <path d="M5 10.500h10"/>
    <path d="M50.500 7.500h7v7h-7z M52.500 7.500v-2h7v7h-2"/>
    <path d="M96.500 5.500l9.500 9.500M106 5.500l-9.500 9.500"/>
  </svg>
</div>
<div class="abs" id="menubar">
  <svg class="ic" style="left:7px;top:2px" width="17" height="17" viewBox="0 0 17 17"><use href="#i-app"/></svg>
  <span class="mi" style="left:30px"><u>F</u>ile</span>
  <span class="mi" style="left:62px"><u>E</u>dit</span>
  <span class="mi" style="left:96px"><u>M</u>odel</span>
  <span class="mi" style="left:144px">V<u>e</u>ctors</span>
  <span class="mi" style="left:196px"><u>B</u>itmaps</span>
  <span class="mi" style="left:253px"><u>R</u>eliefs</span>
  <span class="mi" style="left:301px"><u>T</u>oolpaths</span>
  <span class="mi" style="left:367px"><u>W</u>indow</span>
  <span class="mi" style="left:425px"><u>H</u>elp</span>
  <svg class="ic" style="left:1308px;top:1px" width="58" height="18" viewBox="0 0 58 18">
    <rect x="1.500" y="0.500" width="17" height="17" fill="#fdfdfd" stroke="#ebebeb"/><rect x="20.500" y="0.500" width="17" height="17" fill="#fdfdfd" stroke="#ebebeb"/><rect x="39.500" y="0.500" width="17" height="17" fill="#fdfdfd" stroke="#ebebeb"/>
    <path d="M6.500 12h5.500" stroke="#8c8c8c" stroke-width="2" fill="none"/>
    <path d="M25.500 9h5.500v4h-5.500z" stroke="#808080" stroke-width="1.200" fill="none"/><path d="M27.500 8.500v-2.500h5.500v4h-2" stroke="#808080" stroke-width="1.200" fill="none"/><path d="M27.500 6h5.500M25.500 9h5.500" stroke="#808080" stroke-width="1.800" fill="none"/>
    <path d="M45.500 6.500l6 6M51.500 6.500l-6 6" stroke="#808080" stroke-width="2" fill="none"/>
  </svg>
</div>
<div class="abs" id="left">
  <!-- coordinates inside are relative to top:43 -->
  <div class="lh" style="top:5px">Project Information</div><div class="cbtn" style="left:228px;top:6px"></div>
  <div class="t b" style="left:13px;top:26px">Artwork</div>
  <div class="t b" style="left:119px;top:26px">Relief</div>
  <div class="t" style="left:13px;top:41px">X: 1016 mm</div>
  <div class="t" style="left:119px;top:41px">Max. Z: 18</div>
  <div class="t" style="left:13px;top:56px">Y: 2032 mm</div>
  <div class="t" style="left:119px;top:56px">Min. Z: 0</div>
  <div class="t" style="left:13px;top:71px">2828 x 5656 pixels</div>

  <div class="lh" style="top:93px">File</div><div class="cbtn" style="left:228px;top:94px"></div>
  <svg class="ic" style="left:20px;top:118px" width="24" height="24"><use href="#i-new"/></svg>
  <svg class="ic" style="left:60px;top:118px" width="28" height="24"><use href="#i-open"/></svg>
  <svg class="ic" style="left:102px;top:118px" width="26" height="24"><use href="#i-save"/></svg>
  <svg class="ic" style="left:143px;top:116px" width="28" height="28"><use href="#i-opts"/></svg>
  <svg class="ic" style="left:20px;top:156px" width="24" height="22"><use href="#i-undo"/></svg>
  <svg class="ic" style="left:61px;top:156px" width="24" height="22"><use href="#i-redo"/></svg>
  <svg class="ic" style="left:104px;top:154px" width="22" height="26"><use href="#i-cut"/></svg>
  <svg class="ic" style="left:145px;top:154px" width="24" height="26"><use href="#i-copy"/></svg>
  <svg class="ic" style="left:187px;top:152px" width="26" height="28"><use href="#i-paste"/></svg>

  <div class="lh" style="top:193px">Model</div><div class="cbtn" style="left:228px;top:194px"></div>
  <svg class="ic" style="left:14px;top:216px" width="30" height="30"><use href="#i-bear"/></svg>
  <svg class="ic" style="left:48px;top:228px" width="5" height="8"><path d="M0 0l4 4l-4 4z" fill="#000"/></svg>
  <svg class="ic" style="left:61px;top:218px" width="26" height="26"><use href="#i-bearbw"/></svg>
  <svg class="ic" style="left:100px;top:216px" width="30" height="30"><use href="#i-lamp"/></svg>
  <svg class="ic" style="left:142px;top:215px" width="30" height="32"><use href="#i-mona"/></svg>

  <div class="lh" style="top:257px">Bitmap Tools</div><div class="cbtn" style="left:228px;top:258px"></div>
  <div class="t b" style="left:13px;top:283px;font-style:italic">Brush Diameter:</div>
  <div class="t" style="left:113px;top:283px">5</div>
  <div class="abs" style="left:13px;top:303px;width:191px;height:2px;background:#b8b8b8;border-bottom:1px solid #fff"></div>
  <div class="abs" style="left:20px;top:298px;width:10px;height:15px;background:#f4f4f4;border:1px solid #555"></div>
  <svg class="ic" style="left:221px;top:293px" width="6" height="6"><path d="M3 0l3 3l-3 3l-3-3z" fill="#3a4a78"/></svg>
  <svg class="ic" style="left:21px;top:323px" width="24" height="24"><use href="#i-pencil"/></svg>
  <svg class="ic" style="left:48px;top:332px" width="5" height="8"><path d="M0 0l4 4l-4 4z" fill="#000"/></svg>
  <svg class="ic" style="left:61px;top:324px" width="26" height="24"><use href="#i-bucket"/></svg>
  <svg class="ic" style="left:90px;top:332px" width="5" height="8"><path d="M0 0l4 4l-4 4z" fill="#000"/></svg>
  <svg class="ic" style="left:105px;top:323px" width="24" height="26"><use href="#i-dropper"/></svg>
  <svg class="ic" style="left:142px;top:324px" width="30" height="24"><use href="#i-palette"/></svg>
  <svg class="ic" style="left:174px;top:332px" width="5" height="8"><path d="M0 0l4 4l-4 4z" fill="#000"/></svg>
  <svg class="ic" style="left:184px;top:322px" width="30" height="26"><use href="#i-b2v"/></svg>

  <div class="lh" style="top:361px">Vector Tools</div><div class="cbtn" style="left:228px;top:362px"></div>
  <!-- row1 y 381..416 -->
  <div class="cell" style="left:13px;top:381px;width:40px;height:35px;background:#fff;border:1px solid #6a6a6a;border-right-color:#fff;border-bottom-color:#fff"></div>
  <div class="cell" style="left:56px;top:382px;width:33px;height:34px"></div><div class="pin" style="left:91px;top:388px;height:28px"></div>
  <div class="cell" style="left:140px;top:382px;width:40px;height:34px"></div>
  <div class="cell" style="left:182px;top:382px;width:40px;height:34px"></div>
  <div class="cell" style="left:14px;top:419px;width:40px;height:34px"></div>
  <div class="cell" style="left:56px;top:419px;width:40px;height:34px"></div>
  <div class="cell" style="left:98px;top:419px;width:40px;height:34px"></div>
  <div class="cell" style="left:140px;top:419px;width:40px;height:34px"></div>
  <div class="cell" style="left:182px;top:419px;width:33px;height:34px"></div><div class="pin" style="left:217px;top:425px;height:28px"></div>
  <div class="cell" style="left:56px;top:455px;width:40px;height:33px"></div>
  <div class="cell" style="left:98px;top:455px;width:33px;height:33px"></div><div class="pin" style="left:133px;top:461px;height:27px"></div>
  <svg class="ic" style="left:17px;top:386px" width="26" height="26"><use href="#v-select"/></svg>
  <svg class="ic" style="left:57px;top:384px" width="30" height="30"><use href="#v-node"/></svg>
  <svg class="ic" style="left:90px;top:383px" width="7" height="8"><use href="#i-pin"/></svg>
  <svg class="ic" style="left:99px;top:384px" width="30" height="30"><use href="#v-xform"/></svg>
  <svg class="ic" style="left:145px;top:388px" width="26" height="26"><use href="#v-rect"/></svg>
  <svg class="ic" style="left:187px;top:388px" width="26" height="26"><use href="#v-circle"/></svg>
  <svg class="ic" style="left:18px;top:424px" width="28" height="26"><use href="#v-poly"/></svg>
  <svg class="ic" style="left:60px;top:424px" width="28" height="26"><use href="#v-ellipse"/></svg>
  <svg class="ic" style="left:101px;top:424px" width="28" height="26"><use href="#v-pent"/></svg>
  <svg class="ic" style="left:144px;top:424px" width="26" height="26"><use href="#v-star"/></svg>
  <svg class="ic" style="left:186px;top:424px" width="26" height="26"><use href="#v-arc"/></svg>
  <svg class="ic" style="left:216px;top:420px" width="7" height="8"><use href="#i-pin"/></svg>
  <svg class="ic" style="left:18px;top:458px" width="28" height="28"><use href="#v-text"/></svg>
  <svg class="ic" style="left:57px;top:458px" width="30" height="26"><use href="#v-g1"/></svg>
  <svg class="ic" style="left:99px;top:458px" width="30" height="26"><use href="#v-g2"/></svg>
  <svg class="ic" style="left:132px;top:456px" width="7" height="8"><use href="#i-pin"/></svg>
  <svg class="ic" style="left:142px;top:458px" width="30" height="28"><use href="#v-tape"/></svg>
  <svg class="ic" style="left:185px;top:458px" width="26" height="26"><use href="#v-plus"/></svg>
  <svg class="ic" style="left:17px;top:493px" width="30" height="30"><use href="#v-abc"/></svg>
  <svg class="ic" style="left:59px;top:493px" width="28" height="28"><use href="#v-warp"/></svg>
  <svg class="ic" style="left:99px;top:494px" width="32" height="28"><use href="#v-dots"/></svg>
  <svg class="ic" style="left:143px;top:492px" width="30" height="28"><use href="#v-nodes"/></svg>
  <svg class="ic" style="left:184px;top:496px" width="30" height="26"><use href="#v-smooth"/></svg>
  <svg class="ic" style="left:15px;top:528px" width="32" height="30"><use href="#v-mir1"/></svg>
  <svg class="ic" style="left:57px;top:528px" width="32" height="30"><use href="#v-vee"/></svg>
  <svg class="ic" style="left:99px;top:527px" width="32" height="32"><use href="#v-trim"/></svg>
  <svg class="ic" style="left:142px;top:530px" width="30" height="28"><use href="#v-bowl"/></svg>
  <svg class="ic" style="left:184px;top:528px" width="28" height="30"><use href="#v-mir2"/></svg>
  <svg class="ic" style="left:20px;top:566px" width="26" height="28"><use href="#v-face"/></svg>
  <svg class="ic" style="left:57px;top:564px" width="32" height="32"><use href="#v-star3d"/></svg>

  <div class="lh" style="top:605px">Position, Combine, Trim Vectors</div><div class="cbtn" style="left:228px;top:606px"></div>
  <div class="cell" style="left:15px;top:627px;width:39px;height:33px"></div>
  <div class="cell" style="left:56px;top:627px;width:40px;height:33px"></div>
  <div class="cell" style="left:98px;top:627px;width:40px;height:33px"></div>
  <div class="cell" style="left:140px;top:627px;width:40px;height:33px"></div>
  <div class="cell" style="left:182px;top:627px;width:40px;height:33px"></div>
  <div class="cell" style="left:15px;top:662px;width:39px;height:16px"></div>
  <div class="cell" style="left:56px;top:662px;width:40px;height:16px"></div>
  <div class="cell" style="left:98px;top:662px;width:32px;height:16px"></div><div class="pin" style="left:132px;top:668px;height:10px"></div>
  <svg class="ic" style="left:15px;top:627px" width="208" height="51" viewBox="0 0 208 51"><use href="#p-row"/></svg>
  <div class="t b" style="left:185px;top:667px;font-size:11px;line-height:9px;height:11px;overflow:hidden;transform:scaleX(1.300);transform-origin:0 0">Nes<br>Nes</div>

  <!-- scrollbar -->
  <div class="abs" style="left:252px;top:8px;width:17px;height:670px;background:#f0f0f0"></div>
  <div class="abs" style="left:253px;top:34px;width:15px;height:355px;background:#cdcdcd"></div>
  <svg class="ic" style="left:255px;top:18px" width="12" height="9"><path d="M1 7l5-5l5 5" fill="none" stroke="#505050" stroke-width="2.400"/></svg>
  <svg class="ic" style="left:255px;top:651px" width="12" height="9"><path d="M1 2l5 5l5-5" fill="none" stroke="#505050" stroke-width="2.400"/></svg>
  <!-- right border -->
  <div class="abs" style="left:270px;top:0;width:1px;height:704px;background:#a8a8a8"></div>
  <div class="abs" style="left:271px;top:0;width:1px;height:704px;background:#fdfdfd"></div>
  <!-- tabs -->
  <svg class="ic" style="left:0;top:678px" width="270" height="26"><rect width="270" height="26" fill="#cfcfcf"/><rect width="270" height="26" fill="#c2c2c2" filter="url(#noise)"/></svg>
  <div class="abs" style="left:0;top:678px;width:63px;height:26px;background:#f0f0f0;border-radius:0 0 8px 4px;border-bottom:1px solid #aaa;border-right:1px solid #aaa"></div>
  <div class="abs" style="left:63px;top:678px;width:66px;height:26px;background:#f4f4f4;border-radius:6px 2px 8px 0;border:1px solid #bbb;border-top-color:#fff;border-left-color:#fff"></div>
  <div class="abs" style="left:63px;top:678px;width:207px;height:1px;background:#8e8e8e"></div>
  <div class="t" style="left:8px;top:683px;font-size:12.5px;letter-spacing:-0.45px">Assistant</div>
  <div class="t" style="left:71px;top:684px;font-size:12.5px;letter-spacing:-0.15px">Toolpaths</div>
  <div class="abs" style="left:0;top:704px;width:276px;height:1px;background:#a9a9a9"></div>
</div>
<div class="abs" id="cv" style="left:0;top:0;width:1366px;height:768px;pointer-events:none">
<div class="abs" style="left:277px;top:74px;width:1px;height:673px;background:#9a9a9a"></div>
<div class="abs" style="left:272px;top:43px;width:820px;height:1px;background:#dcdcdc"></div>
<div class="abs" style="left:277px;top:44px;width:812px;height:1px;background:#a8a8a8"></div>
<div class="abs" style="left:1089px;top:44px;width:1px;height:703px;background:#fff"></div>
<div class="abs" style="left:1090px;top:44px;width:1px;height:703px;background:#c8c8c8"></div>
<div class="abs b" style="left:284px;top:47.500px;font-size:16.500px;line-height:20px;letter-spacing:-0.8px;transform:scaleX(0.860);transform-origin:0 0">3D</div>
<svg class="ic" style="left:305px;top:48px" width="22" height="22"><use href="#z-in"/></svg>
<svg class="ic" style="left:328px;top:48px" width="22" height="22"><use href="#z-out"/></svg>
<svg class="ic" style="left:351px;top:48px" width="22" height="22"><use href="#z-prev"/></svg>
<svg class="ic" style="left:382px;top:48px" width="22" height="22"><use href="#z-11"/></svg>
<svg class="ic" style="left:405px;top:48px" width="22" height="22"><use href="#z-fit"/></svg>
<svg class="ic" style="left:428px;top:48px" width="22" height="22"><use href="#z-obj"/></svg>
<div class="abs" style="left:377px;top:49px;width:1px;height:19px;background:#a8a8a8"></div>
<div class="abs" style="left:454px;top:49px;width:1px;height:19px;background:#a8a8a8"></div>
<div class="abs" style="left:531px;top:49px;width:1px;height:19px;background:#a8a8a8"></div>
<div class="abs" style="left:459px;top:48px;width:23px;height:21px;background:#f8f8f8;border:1px solid #888;border-right-color:#fff;border-bottom-color:#fff"></div>
<div class="abs" style="left:482px;top:48px;width:23px;height:21px;background:#f8f8f8;border:1px solid #888;border-right-color:#fff;border-bottom-color:#fff"></div>
<svg class="ic" style="left:462px;top:50px" width="18" height="18"><use href="#t-l1"/></svg>
<svg class="ic" style="left:484px;top:50px" width="18" height="18"><use href="#t-l2"/></svg>
<svg class="ic" style="left:507px;top:49px" width="20" height="20"><use href="#t-eye"/></svg>
<div class="abs" style="left:544px;top:58px;width:73px;height:1px;background:#7a7a7a"></div>
<div class="abs" style="left:544px;top:59px;width:73px;height:1px;background:#9c9c9c"></div>
<div class="abs" style="left:544px;top:60px;width:73px;height:1px;background:#fafafa"></div>
<svg class="ic" style="left:618px;top:50px" width="11" height="20"><path d="M1 0.500h8.500v16l-4 3l-4.500-3z" fill="#f4f4f4"/><path d="M1 0.500h8M1 0.500v16" stroke="#fff" stroke-width="1" fill="none"/><path d="M9.500 0.500v16.500l-3.500 2.500" fill="none" stroke="#6a6a6a" stroke-width="1.300"/></svg>
<svg class="ic" style="left:0;top:0" width="1366" height="768" viewBox="0 0 1366 768" font-family="Liberation Sans, sans-serif" shape-rendering="crispEdges">
<rect x="278" y="74" width="810" height="21" fill="#f0f0f0"/>
<rect x="278" y="95" width="19" height="592" fill="#f0f0f0"/>
<rect x="298" y="96" width="774" height="590" fill="#f0f0f0"/>
<path d="M277 74.500h811 M278 94.500h794 M297.500 74v612" stroke="#9a9a9a" stroke-width="1" fill="none"/>
<path d="M278 95.500h794 M298.500 96v590" stroke="#fff" stroke-width="1" fill="none"/>
<path d="M282 84.500h12 M288.500 78v12" stroke="#aaa" stroke-width="1" stroke-dasharray="1 1" fill="none"/>
<path d="M303.5 92v2 M309.5 92v2 M314.5 92v2 M320.5 90v4 M326.5 92v2 M331.5 92v2 M337.5 92v2 M342.5 92v2 M348.5 88v6 M353.5 92v2 M359.5 92v2 M365.5 92v2 M370.5 92v2 M376.5 90v4 M381.5 92v2 M387.5 92v2 M392.5 92v2 M398.5 92v2 M404.5 88v6 M409.5 92v2 M415.5 92v2 M420.5 92v2 M426.5 92v2 M431.5 90v4 M437.5 92v2 M442.5 92v2 M448.5 92v2 M454.5 92v2 M459.5 88v6 M465.5 92v2 M470.5 92v2 M476.5 92v2 M481.5 92v2 M487.5 90v4 M493.5 92v2 M498.5 92v2 M504.5 92v2 M509.5 92v2 M515.5 88v6 M520.5 92v2 M526.5 92v2 M532.5 92v2 M537.5 92v2 M543.5 90v4 M548.5 92v2 M554.5 92v2 M559.5 92v2 M565.5 92v2 M571.5 88v6 M576.5 92v2 M582.5 92v2 M587.5 92v2 M593.5 92v2 M598.5 90v4 M604.5 92v2 M610.5 92v2 M615.5 92v2 M621.5 92v2 M626.5 88v6 M632.5 92v2 M637.5 92v2 M643.5 92v2 M649.5 92v2 M654.5 90v4 M660.5 92v2 M665.5 92v2 M671.5 92v2 M676.5 92v2 M682.5 88v6 M688.5 92v2 M693.5 92v2 M699.5 92v2 M704.5 92v2 M710.5 90v4 M715.5 92v2 M721.5 92v2 M727.5 92v2 M732.5 92v2 M738.5 88v6 M743.5 92v2 M749.5 92v2 M754.5 92v2 M760.5 92v2 M766.5 90v4 M771.5 92v2 M777.5 92v2 M782.5 92v2 M788.5 92v2 M793.5 88v6 M799.5 92v2 M805.5 92v2 M810.5 92v2 M816.5 92v2 M821.5 90v4 M827.5 92v2 M832.5 92v2 M838.5 92v2 M844.5 92v2 M849.5 88v6 M855.5 92v2 M860.5 92v2 M866.5 92v2 M871.5 92v2 M877.5 90v4 M883.5 92v2 M888.5 92v2 M894.5 92v2 M899.5 92v2 M905.5 88v6 M910.5 92v2 M916.5 92v2 M922.5 92v2 M927.5 92v2 M933.5 90v4 M938.5 92v2 M944.5 92v2 M949.5 92v2 M955.5 92v2 M960.5 88v6 M966.5 92v2 M972.5 92v2 M977.5 92v2 M983.5 92v2 M988.5 90v4 M994.5 92v2 M999.5 92v2 M1005.5 92v2 M1011.5 92v2 M1016.5 88v6 M1022.5 92v2 M1027.5 92v2 M1033.5 92v2 M1038.5 92v2 M1044.5 90v4 M1050.5 92v2 M1055.5 92v2 M1061.5 92v2 M1066.5 92v2" stroke="#000" stroke-width="1" fill="none"/>
<text x="347.3" y="86" font-size="11.3" text-anchor="middle" fill="#000">-1200</text>
<text x="403.0" y="86" font-size="11.3" text-anchor="middle" fill="#000">-1000</text>
<text x="458.7" y="86" font-size="11.3" text-anchor="middle" fill="#000">-800</text>
<text x="514.4" y="86" font-size="11.3" text-anchor="middle" fill="#000">-600</text>
<text x="570.1" y="86" font-size="11.3" text-anchor="middle" fill="#000">-400</text>
<text x="625.8" y="86" font-size="11.3" text-anchor="middle" fill="#000">-200</text>
<text x="681.5" y="86" font-size="11.3" text-anchor="middle" fill="#000">0</text>
<text x="737.2" y="86" font-size="11.3" text-anchor="middle" fill="#000">200</text>
<text x="792.9" y="86" font-size="11.3" text-anchor="middle" fill="#000">400</text>
<text x="848.6" y="86" font-size="11.3" text-anchor="middle" fill="#000">600</text>
<text x="904.3" y="86" font-size="11.3" text-anchor="middle" fill="#000">800</text>
<text x="960.0" y="86" font-size="11.3" text-anchor="middle" fill="#000">1000</text>
<path d="M1008.500 76v18" stroke="#000" stroke-width="1"/>
<text x="1028" y="87" font-size="9.500" fill="#000" stroke="#000" stroke-width="0.150" font-family="DejaVu Sans, sans-serif" textLength="41" lengthAdjust="spacingAndGlyphs">millimetres</text>
<path d="M295 683.5h2 M295 678.5h2 M295 672.5h2 M291 666.5h6 M295 661.5h2 M295 655.5h2 M295 650.5h2 M295 644.5h2 M293 639.5h4 M295 633.5h2 M295 628.5h2 M295 622.5h2 M295 616.5h2 M291 611.5h6 M295 605.5h2 M295 600.5h2 M295 594.5h2 M295 589.5h2 M293 583.5h4 M295 577.5h2 M295 572.5h2 M295 566.5h2 M295 561.5h2 M291 555.5h6 M295 550.5h2 M295 544.5h2 M295 538.5h2 M295 533.5h2 M293 527.5h4 M295 522.5h2 M295 516.5h2 M295 511.5h2 M295 505.5h2 M291 499.5h6 M295 494.5h2 M295 488.5h2 M295 483.5h2 M295 477.5h2 M293 472.5h4 M295 466.5h2 M295 460.5h2 M295 455.5h2 M295 449.5h2 M291 444.5h6 M295 438.5h2 M295 433.5h2 M295 427.5h2 M295 421.5h2 M293 416.5h4 M295 410.5h2 M295 405.5h2 M295 399.5h2 M295 394.5h2 M291 388.5h6 M295 382.5h2 M295 377.5h2 M295 371.5h2 M295 366.5h2 M293 360.5h4 M295 355.5h2 M295 349.5h2 M295 343.5h2 M295 338.5h2 M291 332.5h6 M295 327.5h2 M295 321.5h2 M295 316.5h2 M295 310.5h2 M293 304.5h4 M295 299.5h2 M295 293.5h2 M295 288.5h2 M295 282.5h2 M291 277.5h6 M295 271.5h2 M295 265.5h2 M295 260.5h2 M295 254.5h2 M293 249.5h4 M295 243.5h2 M295 238.5h2 M295 232.5h2 M295 226.5h2 M291 221.5h6 M295 215.5h2 M295 210.5h2 M295 204.5h2 M295 199.5h2 M293 193.5h4 M295 187.5h2 M295 182.5h2 M295 176.5h2 M295 171.5h2 M291 165.5h6 M295 160.5h2 M295 154.5h2 M295 148.5h2 M295 143.5h2 M293 137.5h4 M295 132.5h2 M295 126.5h2 M295 121.5h2 M295 115.5h2 M291 110.5h6 M295 104.5h2 M295 98.5h2" stroke="#000" stroke-width="1" fill="none"/>
<text transform="translate(289.5,667.5) rotate(-90)" font-size="11.3" text-anchor="middle" fill="#000">-1000</text>
<text transform="translate(289.5,611.8) rotate(-90)" font-size="11.3" text-anchor="middle" fill="#000">-800</text>
<text transform="translate(289.5,556.1) rotate(-90)" font-size="11.3" text-anchor="middle" fill="#000">-600</text>
<text transform="translate(289.5,500.4) rotate(-90)" font-size="11.3" text-anchor="middle" fill="#000">-400</text>
<text transform="translate(289.5,444.7) rotate(-90)" font-size="11.3" text-anchor="middle" fill="#000">-200</text>
<text transform="translate(289.5,389.0) rotate(-90)" font-size="11.3" text-anchor="middle" fill="#000">0</text>
<text transform="translate(289.5,333.3) rotate(-90)" font-size="11.3" text-anchor="middle" fill="#000">200</text>
<text transform="translate(289.5,277.6) rotate(-90)" font-size="11.3" text-anchor="middle" fill="#000">400</text>
<text transform="translate(289.5,221.9) rotate(-90)" font-size="11.3" text-anchor="middle" fill="#000">600</text>
<text transform="translate(289.5,166.2) rotate(-90)" font-size="11.3" text-anchor="middle" fill="#000">800</text>
<text transform="translate(289.5,110.5) rotate(-90)" font-size="11.3" text-anchor="middle" fill="#000">1000</text>
<path d="M280 198.500h13" stroke="#000" stroke-width="1"/>
<rect x="540.500" y="106.500" width="284" height="566" fill="#ffff88" stroke="#000" stroke-width="1"/>
<rect x="581" y="172" width="204" height="435" fill="#383838"/>
</svg>
<svg class="ic" style="left:601px;top:192px" width="164" height="395" viewBox="0 0 164 395">
<defs>
<pattern id="hst" width="4" height="2.750" patternUnits="userSpaceOnUse"><rect width="4" height="2.750" fill="#ebebeb"/><rect y="1.550" width="4" height="1.200" fill="#a6a6a6"/></pattern>
<pattern id="dst" width="6.500" height="6.500" patternUnits="userSpaceOnUse" patternTransform="rotate(-52)"><rect width="6.500" height="6.500" fill="#d4d4d4"/><rect y="0" width="6.500" height="1.500" fill="#6a6a6a"/><rect y="2.800" width="6.500" height="2.200" fill="#f6f6f6"/></pattern>
<linearGradient id="gsp" x1="0" y1="0" x2="1" y2="1"><stop offset="0" stop-color="#6a6a6a"/><stop offset="0.450" stop-color="#f0f0f0"/><stop offset="1" stop-color="#777"/></linearGradient>
<radialGradient id="gov" cx="0.500" cy="0.500" r="0.600"><stop offset="0" stop-color="#fafafa"/><stop offset="0.800" stop-color="#f2f2f2"/><stop offset="1" stop-color="#c8c8c8"/></radialGradient>
<filter id="ob"><feGaussianBlur stdDeviation="0.450"/></filter>
<filter id="ob3" x="-20%" y="-20%" width="140%" height="140%"><feGaussianBlur stdDeviation="0.700"/></filter>
<filter id="ob2"><feGaussianBlur stdDeviation="1.200"/></filter>
<clipPath id="qc"><rect x="13.500" y="13.500" width="68.500" height="184.500"/></clipPath>
<g id="quarter" clip-path="url(#qc)">
<rect x="13" y="13" width="70" height="186" fill="#8e8e8e"/>
<path d="M14 40 L82.500 36 L82.500 112 L14 128z" fill="url(#hst)"/>
<path d="M14 14 H70 C45 15 22 28 15 52z" fill="url(#gsp)"/>
<path d="M14 14 H66 C50 16 40 18 34 22 C26 20 20 17 14 14z" fill="#b8b8b8" opacity="0.800"/>
<path d="M68 14 H83 V23 C78 19 74 16 68 14z" fill="#c9c96a"/><path d="M72 14.500 L82.500 21" stroke="#f4f4a0" stroke-width="1" fill="none"/>
<path d="M17.500 82 C14 46 28 24.500 52 22.500 C66 21.500 76 26 82.500 33" fill="none" stroke="#3c3c3c" stroke-width="20.500" stroke-linecap="butt" filter="url(#ob)"/>
<path d="M17.500 82 C14 46 28 24.500 52 22.500 C66 21.500 76 26 82.500 33" fill="none" stroke="#e2e2e2" stroke-width="18"/>
<path d="M17.500 82 C14 46 28 24.500 52 22.500 C66 21.500 76 26 82.500 33" fill="none" stroke="#4c4c4c" stroke-width="12.800"/>
<path d="M17.500 82 C14 46 28 24.500 52 22.500 C66 21.500 76 26 82.500 33" fill="none" stroke="#f4f4f4" stroke-width="9.800"/>
<path d="M17.500 82 C14 46 28 24.500 52 22.500 C66 21.500 76 26 82.500 33" fill="none" stroke="#4c4c4c" stroke-width="4.800"/>
<path d="M17.500 82 C14 46 28 24.500 52 22.500 C66 21.500 76 26 82.500 33" fill="none" stroke="#f0f0f0" stroke-width="2.200"/>
<path d="M62 88 L40 100 L15 132 L15 140 L34 141 L48 118 L66 100z" fill="url(#dst)"/>
<path d="M70 70 L46 86 L38 97 L58 92 L76 76z" fill="url(#dst)"/>
<path d="M14 142 H36 V198 H14z" fill="#7c7c7c"/>
<rect x="19" y="160" width="9" height="38" fill="#a4a4a4"/>
<path d="M64 113 C50 117 43 124 40 138 C37 152 31 160 30 172 L30 198 L63 198 L63 188 C62 176 66 168 62 158 C59 146 60 130 64 113z" fill="#f8f8f8"/>
<path d="M64 113 C50 117 43 124 40 138 C37 152 31 160 30 172 L30 199 M63 199 L63 188 C62 176 66 168 62 158 C59 146 60 130 64 113" fill="none" stroke="#2c2c2c" stroke-width="8.500" filter="url(#ob2)" opacity="0.900"/>
<rect x="62" y="100" width="21" height="98" fill="#a8a8a8"/>
<rect x="70.500" y="189.500" width="12" height="9" fill="#6c6c6c"/>
<path d="M66 152 C70 165 70 175 66 190 H83 V152z" fill="#848484"/>
<path d="M14 50 C20 42 31 45 30.500 54 C30 61 23 62 21 66 C26 65 30 69 28 76 C26 82 18 84 14 84z" fill="#dcdcdc" stroke="#484848" stroke-width="1.100"/>
<path d="M27 48 C21 50 22 58 28.500 57" fill="none" stroke="#303030" stroke-width="6.0" stroke-linecap="round" stroke-linejoin="round" filter="url(#ob3)" /><path d="M27 48 C21 50 22 58 28.500 57" fill="none" stroke="#a8a8a8" stroke-width="3.3" stroke-linecap="round" stroke-linejoin="round"/><path d="M27 48 C21 50 22 58 28.500 57" fill="none" stroke="#e8e8e8" stroke-width="1.9" stroke-linecap="round" stroke-linejoin="round"/><path d="M27 48 C21 50 22 58 28.500 57" fill="none" stroke="#fcfcfc" stroke-width="0.96" stroke-linecap="round" stroke-linejoin="round"/>
<path d="M15 67 C21 62 29 66 27 74" fill="none" stroke="#303030" stroke-width="6.0" stroke-linecap="round" stroke-linejoin="round" filter="url(#ob3)" /><path d="M15 67 C21 62 29 66 27 74" fill="none" stroke="#a8a8a8" stroke-width="3.3" stroke-linecap="round" stroke-linejoin="round"/><path d="M15 67 C21 62 29 66 27 74" fill="none" stroke="#e8e8e8" stroke-width="1.9" stroke-linecap="round" stroke-linejoin="round"/><path d="M15 67 C21 62 29 66 27 74" fill="none" stroke="#fcfcfc" stroke-width="0.96" stroke-linecap="round" stroke-linejoin="round"/>
<path d="M14 73l8 2.500M14 78l7 2.500M14 83l5 1.500" stroke="#505050" stroke-width="1.200"/>
<path d="M15 88 C28 84 36 74 37 62 C38 46 46 37 56 36.500 C68 36 72 50 75 58 C77 64 80 66 82.500 67" fill="none" stroke="#303030" stroke-width="7.6" stroke-linecap="round" stroke-linejoin="round" filter="url(#ob3)" /><path d="M15 88 C28 84 36 74 37 62 C38 46 46 37 56 36.500 C68 36 72 50 75 58 C77 64 80 66 82.500 67" fill="none" stroke="#a8a8a8" stroke-width="4.9" stroke-linecap="round" stroke-linejoin="round"/><path d="M15 88 C28 84 36 74 37 62 C38 46 46 37 56 36.500 C68 36 72 50 75 58 C77 64 80 66 82.500 67" fill="none" stroke="#e8e8e8" stroke-width="3.5" stroke-linecap="round" stroke-linejoin="round"/><path d="M15 88 C28 84 36 74 37 62 C38 46 46 37 56 36.500 C68 36 72 50 75 58 C77 64 80 66 82.500 67" fill="none" stroke="#fcfcfc" stroke-width="1.60" stroke-linecap="round" stroke-linejoin="round"/>
<path d="M82.500 70 C66 74 44 84 32 98 C22 110 16 120 15.500 134" fill="none" stroke="#303030" stroke-width="7.6" stroke-linecap="round" stroke-linejoin="round" filter="url(#ob3)" /><path d="M82.500 70 C66 74 44 84 32 98 C22 110 16 120 15.500 134" fill="none" stroke="#a8a8a8" stroke-width="4.9" stroke-linecap="round" stroke-linejoin="round"/><path d="M82.500 70 C66 74 44 84 32 98 C22 110 16 120 15.500 134" fill="none" stroke="#e8e8e8" stroke-width="3.5" stroke-linecap="round" stroke-linejoin="round"/><path d="M82.500 70 C66 74 44 84 32 98 C22 110 16 120 15.500 134" fill="none" stroke="#fcfcfc" stroke-width="1.60" stroke-linecap="round" stroke-linejoin="round"/>
<path d="M82.500 78 C68 82 50 92 42 104" fill="none" stroke="#303030" stroke-width="6.6" stroke-linecap="round" stroke-linejoin="round" filter="url(#ob3)" /><path d="M82.500 78 C68 82 50 92 42 104" fill="none" stroke="#a8a8a8" stroke-width="3.9" stroke-linecap="round" stroke-linejoin="round"/><path d="M82.500 78 C68 82 50 92 42 104" fill="none" stroke="#e8e8e8" stroke-width="2.5" stroke-linecap="round" stroke-linejoin="round"/><path d="M82.500 78 C68 82 50 92 42 104" fill="none" stroke="#fcfcfc" stroke-width="1.20" stroke-linecap="round" stroke-linejoin="round"/>
<path d="M34 97 C46 89 62 86.500 73 87.500 L82.500 80" fill="none" stroke="#303030" stroke-width="6.6" stroke-linecap="round" stroke-linejoin="round" filter="url(#ob3)" /><path d="M34 97 C46 89 62 86.500 73 87.500 L82.500 80" fill="none" stroke="#a8a8a8" stroke-width="3.9" stroke-linecap="round" stroke-linejoin="round"/><path d="M34 97 C46 89 62 86.500 73 87.500 L82.500 80" fill="none" stroke="#e8e8e8" stroke-width="2.5" stroke-linecap="round" stroke-linejoin="round"/><path d="M34 97 C46 89 62 86.500 73 87.500 L82.500 80" fill="none" stroke="#fcfcfc" stroke-width="1.20" stroke-linecap="round" stroke-linejoin="round"/>
<path d="M40 98.500 C52 93.500 66 92 74 93.500 L82.500 87" fill="none" stroke="#303030" stroke-width="5.6" stroke-linecap="round" stroke-linejoin="round" filter="url(#ob3)" /><path d="M40 98.500 C52 93.500 66 92 74 93.500 L82.500 87" fill="none" stroke="#a8a8a8" stroke-width="2.9" stroke-linecap="round" stroke-linejoin="round"/><path d="M40 98.500 C52 93.500 66 92 74 93.500 L82.500 87" fill="none" stroke="#e8e8e8" stroke-width="1.5" stroke-linecap="round" stroke-linejoin="round"/><path d="M40 98.500 C52 93.500 66 92 74 93.500 L82.500 87" fill="none" stroke="#fcfcfc" stroke-width="0.80" stroke-linecap="round" stroke-linejoin="round"/>
<path d="M34 97 C44 103 66 100 82.500 99" fill="none" stroke="#303030" stroke-width="6.6" stroke-linecap="round" stroke-linejoin="round" filter="url(#ob3)" /><path d="M34 97 C44 103 66 100 82.500 99" fill="none" stroke="#a8a8a8" stroke-width="3.9" stroke-linecap="round" stroke-linejoin="round"/><path d="M34 97 C44 103 66 100 82.500 99" fill="none" stroke="#e8e8e8" stroke-width="2.5" stroke-linecap="round" stroke-linejoin="round"/><path d="M34 97 C44 103 66 100 82.500 99" fill="none" stroke="#fcfcfc" stroke-width="1.20" stroke-linecap="round" stroke-linejoin="round"/>
<ellipse cx="82.500" cy="66.500" rx="9" ry="7.500" fill="#dedede" stroke="#404040" stroke-width="1.300"/>
<path d="M75.500 64 C76 69 79 70.500 82.500 68.500" fill="none" stroke="#4a4a4a" stroke-width="1.500"/>
<path d="M77 61.500 C79 60 81 61 82.500 63" fill="none" stroke="#fff" stroke-width="1.400"/>
<circle cx="82.500" cy="57.500" r="2.400" fill="#f0f0f0" stroke="#505050" stroke-width="0.900"/>
<path d="M14.500 134 L36 136 L35 142 C31 139 28 143 25 140 C22 138 19 142 14.500 139z" fill="#e6e6e6" stroke="#555" stroke-width="0.900"/>
<path d="M21 143.500 a6.200 6.200 0 1 0 0.100 0z" fill="none" stroke="#303030" stroke-width="6.6" stroke-linecap="round" stroke-linejoin="round" filter="url(#ob3)" /><path d="M21 143.500 a6.200 6.200 0 1 0 0.100 0z" fill="none" stroke="#a8a8a8" stroke-width="3.9" stroke-linecap="round" stroke-linejoin="round"/><path d="M21 143.500 a6.200 6.200 0 1 0 0.100 0z" fill="none" stroke="#e8e8e8" stroke-width="2.5" stroke-linecap="round" stroke-linejoin="round"/><path d="M21 143.500 a6.200 6.200 0 1 0 0.100 0z" fill="none" stroke="#fcfcfc" stroke-width="1.20" stroke-linecap="round" stroke-linejoin="round"/>
<ellipse cx="21" cy="150" rx="3" ry="2.200" fill="#555" transform="rotate(-25 21 150)"/>
<path d="M19 157 C16.500 165 16.500 170 16.500 198" fill="none" stroke="#303030" stroke-width="6.4" stroke-linecap="round" stroke-linejoin="round" filter="url(#ob3)" /><path d="M19 157 C16.500 165 16.500 170 16.500 198" fill="none" stroke="#a8a8a8" stroke-width="3.6999999999999997" stroke-linecap="round" stroke-linejoin="round"/><path d="M19 157 C16.500 165 16.500 170 16.500 198" fill="none" stroke="#e8e8e8" stroke-width="2.3" stroke-linecap="round" stroke-linejoin="round"/><path d="M19 157 C16.500 165 16.500 170 16.500 198" fill="none" stroke="#fcfcfc" stroke-width="1.12" stroke-linecap="round" stroke-linejoin="round"/>
<path d="M65 112 C50 116 43 124 40 138 C37 152 31 160 30 172 L30 198" fill="none" stroke="#303030" stroke-width="6.6" stroke-linecap="round" stroke-linejoin="round" filter="url(#ob3)" /><path d="M65 112 C50 116 43 124 40 138 C37 152 31 160 30 172 L30 198" fill="none" stroke="#a8a8a8" stroke-width="3.9" stroke-linecap="round" stroke-linejoin="round"/><path d="M65 112 C50 116 43 124 40 138 C37 152 31 160 30 172 L30 198" fill="none" stroke="#e8e8e8" stroke-width="2.5" stroke-linecap="round" stroke-linejoin="round"/><path d="M65 112 C50 116 43 124 40 138 C37 152 31 160 30 172 L30 198" fill="none" stroke="#fcfcfc" stroke-width="1.20" stroke-linecap="round" stroke-linejoin="round"/>
<path d="M65 112 C60 128 59 144 62 156 C64 162 62 166 62 170 C66 176 63 186 64 198" fill="none" stroke="#303030" stroke-width="6.6" stroke-linecap="round" stroke-linejoin="round" filter="url(#ob3)" /><path d="M65 112 C60 128 59 144 62 156 C64 162 62 166 62 170 C66 176 63 186 64 198" fill="none" stroke="#a8a8a8" stroke-width="3.9" stroke-linecap="round" stroke-linejoin="round"/><path d="M65 112 C60 128 59 144 62 156 C64 162 62 166 62 170 C66 176 63 186 64 198" fill="none" stroke="#e8e8e8" stroke-width="2.5" stroke-linecap="round" stroke-linejoin="round"/><path d="M65 112 C60 128 59 144 62 156 C64 162 62 166 62 170 C66 176 63 186 64 198" fill="none" stroke="#fcfcfc" stroke-width="1.20" stroke-linecap="round" stroke-linejoin="round"/>
<path d="M82.500 97 C74 99 73 108 76 116 L82.500 131z" fill="#6a6a6a"/>
<path d="M82.500 97 C74 98 72.500 108 76 117 L82.500 131" fill="none" stroke="#303030" stroke-width="6.2" stroke-linecap="round" stroke-linejoin="round" filter="url(#ob3)" /><path d="M82.500 97 C74 98 72.500 108 76 117 L82.500 131" fill="none" stroke="#a8a8a8" stroke-width="3.5" stroke-linecap="round" stroke-linejoin="round"/><path d="M82.500 97 C74 98 72.500 108 76 117 L82.500 131" fill="none" stroke="#e8e8e8" stroke-width="2.1" stroke-linecap="round" stroke-linejoin="round"/><path d="M82.500 97 C74 98 72.500 108 76 117 L82.500 131" fill="none" stroke="#fcfcfc" stroke-width="1.04" stroke-linecap="round" stroke-linejoin="round"/>
<circle cx="82.500" cy="103" r="3.200" fill="#f0f0f0" stroke="#606060" stroke-width="0.800"/>
<path d="M64 130 C72 139 72 152 63.500 162 C71 157 77 155 83 154.500 L83 137.500 C77 137 70 134.500 64 130z" fill="#ececec" stroke="#5a5a5a" stroke-width="1"/>
<path d="M66 132.500 L79 143.500 M65.500 159.500 L79 150" stroke="#fdfdfd" stroke-width="1.600" fill="none"/>
<path d="M72 140 C73.500 144 73.500 148 72 152" stroke="#a8a8a8" stroke-width="1" fill="none"/>
<ellipse cx="82.500" cy="146" rx="7" ry="5.500" fill="#fbfbfb" stroke="#909090" stroke-width="0.800"/>
<path d="M82.500 160 C78 158 72 160 72 166 C72 170 76 170 78 167" fill="none" stroke="#303030" stroke-width="6.2" stroke-linecap="round" stroke-linejoin="round" filter="url(#ob3)" /><path d="M82.500 160 C78 158 72 160 72 166 C72 170 76 170 78 167" fill="none" stroke="#a8a8a8" stroke-width="3.5" stroke-linecap="round" stroke-linejoin="round"/><path d="M82.500 160 C78 158 72 160 72 166 C72 170 76 170 78 167" fill="none" stroke="#e8e8e8" stroke-width="2.1" stroke-linecap="round" stroke-linejoin="round"/><path d="M82.500 160 C78 158 72 160 72 166 C72 170 76 170 78 167" fill="none" stroke="#fcfcfc" stroke-width="1.04" stroke-linecap="round" stroke-linejoin="round"/>
<path d="M76 168 C78 164 80 164 82.500 166 V172 H76z" fill="#505050"/>
<path d="M82.500 170 L73 181 C72 184 74 186 76 186" fill="none" stroke="#303030" stroke-width="6.2" stroke-linecap="round" stroke-linejoin="round" filter="url(#ob3)" /><path d="M82.500 170 L73 181 C72 184 74 186 76 186" fill="none" stroke="#a8a8a8" stroke-width="3.5" stroke-linecap="round" stroke-linejoin="round"/><path d="M82.500 170 L73 181 C72 184 74 186 76 186" fill="none" stroke="#e8e8e8" stroke-width="2.1" stroke-linecap="round" stroke-linejoin="round"/><path d="M82.500 170 L73 181 C72 184 74 186 76 186" fill="none" stroke="#fcfcfc" stroke-width="1.04" stroke-linecap="round" stroke-linejoin="round"/>
<path d="M82.500 175 L76 183 H82.500z" fill="#888"/>
<path d="M75 187.500 H82.500" fill="none" stroke="#303030" stroke-width="6.0" stroke-linecap="round" stroke-linejoin="round" filter="url(#ob3)" /><path d="M75 187.500 H82.500" fill="none" stroke="#a8a8a8" stroke-width="3.3" stroke-linecap="round" stroke-linejoin="round"/><path d="M75 187.500 H82.500" fill="none" stroke="#e8e8e8" stroke-width="1.9" stroke-linecap="round" stroke-linejoin="round"/><path d="M75 187.500 H82.500" fill="none" stroke="#fcfcfc" stroke-width="0.96" stroke-linecap="round" stroke-linejoin="round"/>
</g>
</defs>
<rect x="0" y="0" width="164" height="395" fill="#f4f4f4"/>
<rect x="0.500" y="0.500" width="163" height="394" fill="none" stroke="#d4d4d4" stroke-width="1"/>
<rect x="2" y="2" width="160" height="391" fill="none" stroke="#e6e6e6" stroke-width="2"/>
<rect x="5.500" y="5.500" width="153" height="384" fill="none" stroke="#fcfcfc" stroke-width="3"/>
<rect x="8.800" y="8.800" width="146.400" height="377.400" fill="none" stroke="#a0a0a0" stroke-width="1.600"/>
<rect x="12.800" y="12.800" width="138.400" height="369.400" fill="#8e8e8e" stroke="#565656" stroke-width="1.800"/>
<use href="#quarter"/>
<use href="#quarter" transform="translate(164,0) scale(-1,1)"/>
<use href="#quarter" transform="translate(0,395) scale(1,-1)"/>
<use href="#quarter" transform="translate(164,395) scale(-1,-1)"/>
</svg>

<div class="abs" style="left:1071px;top:74px;width:17px;height:21px;background:#ececec;border:1px solid #fff;border-right-color:#666;border-bottom-color:#666"></div>
<svg class="ic" style="left:1074px;top:79px" width="11" height="11"><path d="M1 2.500h3M7 2.500h3" stroke="#000" stroke-width="1"/><path d="M1 5h9l-4.500 4.500z" fill="#000"/></svg>
<div class="abs" style="left:1072px;top:96px;width:16px;height:590px;background:#f0f0f0"></div>
<div class="abs" style="left:1072px;top:113px;width:15px;height:555px;background:#cdcdcd"></div>
<svg class="ic" style="left:1074px;top:100px" width="12" height="8"><path d="M1.500 6.500l4.500-4.500l4.500 4.500" fill="none" stroke="#555" stroke-width="1.800"/></svg>
<svg class="ic" style="left:1074px;top:673px" width="12" height="8"><path d="M1.500 1.500l4.500 4.500l4.500-4.500" fill="none" stroke="#555" stroke-width="1.800"/></svg>
<div class="abs" style="left:278px;top:686px;width:810px;height:16px;background:#f0f0f0"></div>
<div class="abs" style="left:278px;top:685px;width:20px;height:17px;background:#f0f0f0;border:1px solid #fff;border-right-color:#777;border-bottom-color:#777"></div>
<svg class="ic" style="left:283px;top:688px" width="10" height="10"><path d="M1.500 1v8" stroke="#000" stroke-width="1" stroke-dasharray="2 1"/><path d="M4 1l5 4l-5 4z" fill="#000"/></svg>
<div class="abs" style="left:315px;top:686px;width:739px;height:15px;background:#cdcdcd"></div>
<svg class="ic" style="left:302px;top:688px" width="8" height="12"><path d="M6.500 1.500l-4.500 4.500l4.500 4.500" fill="none" stroke="#555" stroke-width="1.800"/></svg>
<svg class="ic" style="left:1059px;top:688px" width="8" height="12"><path d="M1.500 1.500l4.500 4.500l-4.500 4.500" fill="none" stroke="#555" stroke-width="1.800"/></svg>
<div class="abs" style="left:278px;top:705px;width:811px;height:1px;background:#a8a8a8"></div>
<div class="abs" style="left:278px;top:706px;width:811px;height:1px;background:#fff"></div>
<div class="abs" style="left:298px;top:723px;width:25px;height:20px;background:#000"></div>
<div class="abs" style="left:283px;top:711px;width:25px;height:20px;background:#fff;border:1px solid #222"></div>
<svg class="ic" style="left:310px;top:711px" width="13" height="11"><circle cx="4.500" cy="4" r="3" fill="none" stroke="#000" stroke-width="1"/><circle cx="8" cy="6.500" r="3" fill="none" stroke="#000" stroke-width="1"/></svg>
<div class="sw" style="left:333px;background:#ffffff"></div>
<div class="sw" style="left:368px;background:#000000"></div>
<div class="sw" style="left:403px;background:#00ffff"></div>
<div class="sw" style="left:438px;background:#2f3fdc"></div>
<div class="sw" style="left:473px;background:#5aba50"></div>
<div class="sw" style="left:508px;background:#dc1020"></div>
<div class="sw" style="left:543px;background:#a02ce0"></div>
<div class="sw" style="left:578px;background:#ffff80"></div>
<div class="sw" style="left:613px;background:#b0a038"></div>
<div class="sw" style="left:648px;background:#ffc818"></div>
<div class="sw" style="left:683px;background:#060606"></div>
<div class="sw" style="left:718px;background:#060606"></div>
<div class="sw" style="left:753px;background:#060606"></div>
<div class="sw" style="left:788px;background:#060606"></div>
<div class="sw" style="left:823px;background:#060606"></div>
<div class="sw" style="left:858px;background:#060606"></div>
<div class="sw" style="left:893px;background:#060606"></div>
<div class="sw" style="left:928px;background:#060606"></div>
<div class="sw" style="left:963px;background:#060606"></div>
<div class="sw" style="left:998px;background:#060606"></div>
<div class="sw" style="left:1033px;background:#060606"></div>
<svg class="ic" style="left:1073px;top:712px" width="12" height="8"><path d="M1.500 6.500l4.500-4.500l4.500 4.500" fill="none" stroke="#555" stroke-width="1.800"/></svg>
<svg class="ic" style="left:1073px;top:734px" width="12" height="8"><path d="M1.500 1.500l4.500 4.500l4.500-4.500" fill="none" stroke="#555" stroke-width="1.800"/></svg>
<div class="abs" style="left:277px;top:746px;width:813px;height:1px;background:#e0e0e0"></div>
</div>
<div class="abs" id="right" style="left:0;top:0;width:1366px;height:768px">
  <div class="abs" style="left:1093px;top:44px;width:1px;height:704px;background:#a0a0a0"></div>
  <div class="abs" style="left:1094px;top:44px;width:1px;height:704px;background:#fff"></div>
  <div class="abs" style="left:1093px;top:43px;width:273px;height:1px;background:#dcdcdc"></div>
  <div class="abs" style="left:1365px;top:43px;width:1px;height:705px;background:#9c9c9c"></div>
  <div class="abs" style="left:1364px;top:44px;width:1px;height:703px;background:#fafafa"></div>

  <div class="rh" style="top:45px">Vectors</div><div class="cbtn cb2" style="left:1327px;top:46px"></div>
  <div class="dd" style="top:62px"><span class="t" style="left:1px;top:1px;font-size:12.3px">Default Sheet</span><div class="ddb"></div></div>
  <svg class="ic" style="left:1102px;top:90px" width="18" height="18"><use href="#i-new"/></svg>
  <svg class="ic" style="left:1137px;top:91px" width="20" height="17"><use href="#i-open"/></svg>
  <svg class="ic" style="left:1176px;top:92px" width="17" height="16"><use href="#i-save"/></svg>
  <svg class="ic" style="left:1211px;top:88px" width="20" height="22"><use href="#r-book"/></svg>
  <svg class="ic" style="left:1250px;top:90px" width="14" height="17"><use href="#r-newbulb"/></svg>
  <svg class="ic" style="left:1289px;top:91px" width="12" height="15"><use href="#r-bin"/></svg>
  <svg class="ic" style="left:1323px;top:89px" width="18" height="18"><use href="#r-bulbs"/></svg>
  <div class="rrow" style="top:112px;height:26px"></div>
  <div class="abs" style="left:1106px;top:117px;width:17px;height:17px;background:#e4e4e4;border:1px solid #fff;border-right-color:#999;border-bottom-color:#999"></div>
  <div class="abs" style="left:1108px;top:119px;width:13px;height:13px;background:#000;border-radius:50%"></div>
  <div class="t" style="left:1128px;top:119px;font-size:12.3px">Default Layer</div>
  <svg class="ic" style="left:1287px;top:116px" width="54" height="18"><use href="#r-lbtns"/></svg>
  <svg class="ic" style="left:1312px;top:141px" width="30" height="12"><use href="#r-updown"/></svg>

  <div class="rh" style="top:172px">Bitmaps</div><div class="cbtn cb2" style="left:1327px;top:173px"></div>
  <svg class="ic" style="left:1102px;top:190px" width="18" height="18"><use href="#i-new"/></svg>
  <svg class="ic" style="left:1132px;top:191px" width="20" height="17"><use href="#i-open"/></svg>
  <svg class="ic" style="left:1165px;top:192px" width="17" height="16"><use href="#i-save"/></svg>
  <svg class="ic" style="left:1195px;top:188px" width="20" height="22"><use href="#r-book"/></svg>
  <svg class="ic" style="left:1228px;top:190px" width="18" height="20"><use href="#r-grey"/></svg>
  <svg class="ic" style="left:1258px;top:189px" width="22" height="22"><use href="#r-mona2"/></svg>
  <svg class="ic" style="left:1294px;top:191px" width="12" height="15"><use href="#r-bin"/></svg>
  <svg class="ic" style="left:1323px;top:189px" width="18" height="18"><use href="#r-bulbs"/></svg>
  <div class="rrow" style="top:213px;height:24px"></div>
  <svg class="ic" style="left:1106px;top:217px" width="17" height="17"><use href="#r-mona"/></svg>
  <div class="t" style="left:1128px;top:219px;font-size:12.3px">Bitmap Layer 1</div>

  <div class="rh" style="top:253px">Reliefs</div><div class="cbtn cb2" style="left:1327px;top:254px"></div>
  <div class="dd" style="top:270px"><span class="t" style="left:1px;top:1px;font-size:12.3px">Front Relief</span><div class="ddb"></div></div>
  <svg class="ic" style="left:1102px;top:298px" width="18" height="18"><use href="#i-new"/></svg>
  <svg class="ic" style="left:1128px;top:299px" width="20" height="17"><use href="#i-open"/></svg>
  <svg class="ic" style="left:1157px;top:300px" width="17" height="16"><use href="#i-save"/></svg>
  <svg class="ic" style="left:1184px;top:296px" width="20" height="22"><use href="#r-book"/></svg>
  <svg class="ic" style="left:1210px;top:297px" width="22" height="20"><use href="#r-layers"/></svg>
  <svg class="ic" style="left:1242px;top:298px" width="14" height="17"><use href="#r-newbulb"/></svg>
  <svg class="ic" style="left:1270px;top:300px" width="14" height="14"><use href="#r-bearbw"/></svg>
  <svg class="ic" style="left:1298px;top:299px" width="12" height="15"><use href="#r-bin"/></svg>
  <svg class="ic" style="left:1323px;top:297px" width="18" height="18"><use href="#r-bulbs"/></svg>
  <div class="rrow" style="top:321px;height:25px"></div>
  <svg class="ic" style="left:1109px;top:323px" width="24" height="22"><use href="#r-relief"/></svg>
  <svg class="ic" style="left:1138px;top:329px" width="5" height="8"><path d="M0 0l4 4l-4 4z" fill="#000"/></svg>
  <div class="t" style="left:1149px;top:327px;font-size:12.3px">Relief Layer 1</div>
  <svg class="ic" style="left:1323px;top:324px" width="18" height="18"><use href="#r-bulbbtn"/></svg>
  <svg class="ic" style="left:1312px;top:349px" width="30" height="12"><use href="#r-updown"/></svg>

  <!-- tabs -->
  <svg class="ic" style="left:1095px;top:721px" width="271" height="26"><rect width="271" height="26" fill="#cfcfcf"/><rect width="271" height="26" fill="#c2c2c2" filter="url(#noise)"/></svg>
  <div class="abs" style="left:1095px;top:721px;width:49px;height:26px;background:#f0f0f0;border-radius:0 0 8px 4px;border-bottom:1px solid #aaa;border-right:1px solid #aaa"></div>
  <div class="abs" style="left:1144px;top:721px;width:48px;height:26px;background:#f4f4f4;border-radius:6px 2px 8px 0;border:1px solid #bbb;border-top-color:#fff;border-left-color:#fff"></div>
  <div class="abs" style="left:1144px;top:721px;width:221px;height:1px;background:#8e8e8e"></div>
  <div class="t" style="left:1103px;top:726px;font-size:12.5px;letter-spacing:-0.5px">Layers</div>
  <div class="t" style="left:1151px;top:727px;font-size:12.5px;letter-spacing:-0.25px">Add In</div>
  <div class="abs" style="left:1093px;top:747px;width:273px;height:1px;background:#a9a9a9"></div>
</div>
<!-- status bar -->
<div class="abs" style="left:0;top:748px;width:1366px;height:20px;background:#f0f0f0"></div>
<div class="sb" style="left:1022px;width:67px">X: 1170.484</div>
<div class="sb" style="left:1092px;width:66px">Y: 684.040</div>
<div class="sb" style="left:1161px;width:60px"></div>
<div class="sb" style="left:1224px;width:70px"></div>
<div class="sb" style="left:1297px;width:70px"></div>
</div>
</body>
</html>
